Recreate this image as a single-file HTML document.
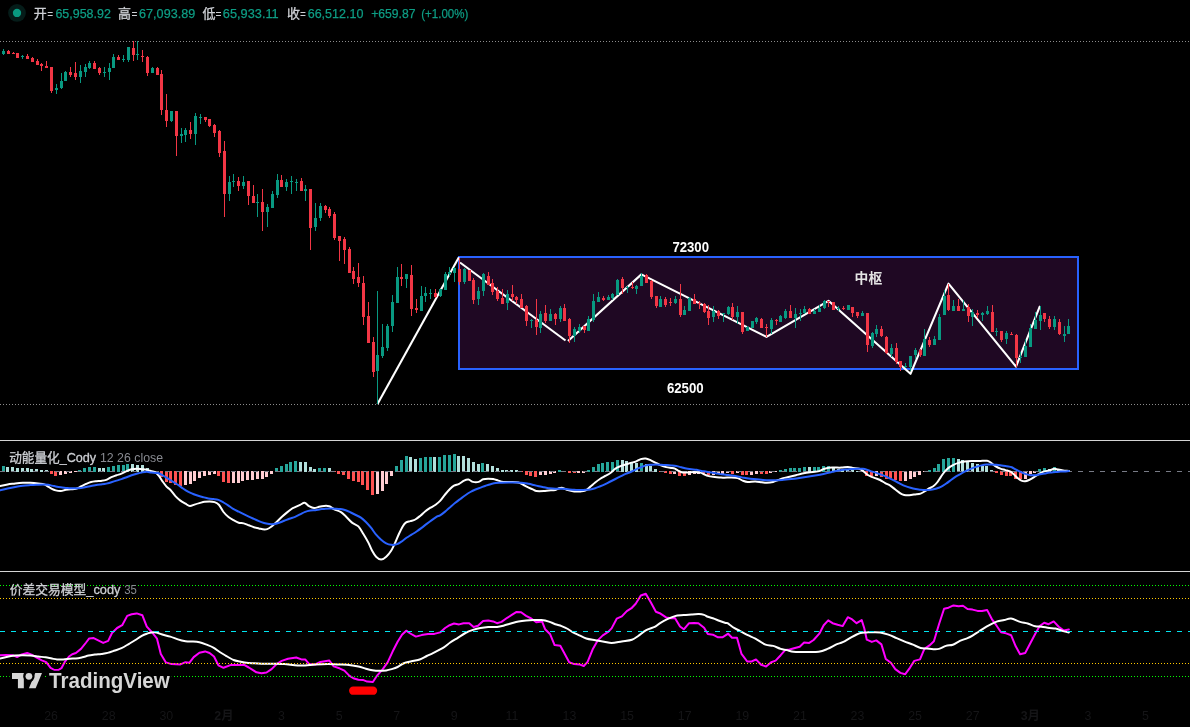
<!DOCTYPE html>
<html lang="zh"><head><meta charset="utf-8"><title>Chart</title><style>html,body{margin:0;padding:0;background:#000;overflow:hidden}svg{display:block}</style></head><body>
<svg width="1190" height="727" viewBox="0 0 1190 727" style="display:block">
<rect width="1190" height="727" fill="#000"/>
<defs>
<pattern id="dg" width="3" height="1" patternUnits="userSpaceOnUse"><rect x="0" y="0" width="1" height="1" fill="#8c8c8c"/></pattern>
<pattern id="dgr" width="3" height="1" patternUnits="userSpaceOnUse"><rect x="0" y="0" width="1" height="1" fill="#00ff00"/></pattern>
<pattern id="dor" width="3" height="1" patternUnits="userSpaceOnUse"><rect x="0" y="0" width="1" height="1" fill="#ffc800"/></pattern>
<pattern id="dcy" width="11" height="1" patternUnits="userSpaceOnUse"><rect x="0" y="0" width="5" height="1" fill="#00e5f0"/></pattern>
<pattern id="dzz" width="11" height="1" patternUnits="userSpaceOnUse"><rect x="0" y="0" width="5" height="1" fill="#787b86"/></pattern>
</defs>
<g shape-rendering="crispEdges">
<rect x="0" y="41" width="1190" height="1" fill="url(#dg)"/>
<rect x="0" y="404" width="1190" height="1" fill="url(#dg)"/>
<rect x="0" y="440" width="1190" height="1" fill="#d4d4d4"/>
<rect x="0" y="571" width="1190" height="1" fill="#d4d4d4"/>
<rect x="459" y="257" width="619" height="112" fill="#1f0823" stroke="#2962ff" stroke-width="2"/>
</g>
<polyline points="377.5,404 458.9,257.3" fill="none" stroke="#fff" stroke-width="2.1" stroke-linejoin="round" stroke-linecap="butt"/>
<polyline points="460,262.5 565.5,340.5" fill="none" stroke="#fff" stroke-width="2.1" stroke-linejoin="round" stroke-linecap="butt"/>
<polyline points="568,341 641.4,274.4 766.5,336.9 828.5,300.8 910.5,373.8 948.5,283.6 1016,366.7 1040,305.8" fill="none" stroke="#fff" stroke-width="2.1" stroke-linejoin="round" stroke-linecap="butt"/>
<g shape-rendering="crispEdges">
<rect x="3" y="49" width="1" height="6" fill="#089981"/>
<rect x="2" y="51" width="3" height="3" fill="#089981"/>
<rect x="8" y="50" width="1" height="4" fill="#f23645"/>
<rect x="7" y="51" width="3" height="3" fill="#f23645"/>
<rect x="13" y="52" width="1" height="2" fill="#f23645"/>
<rect x="12" y="53" width="3" height="1" fill="#f23645"/>
<rect x="17" y="53" width="1" height="5" fill="#f23645"/>
<rect x="16" y="53" width="3" height="5" fill="#f23645"/>
<rect x="22" y="55" width="1" height="4" fill="#089981"/>
<rect x="21" y="56" width="3" height="1" fill="#089981"/>
<rect x="27" y="54" width="1" height="5" fill="#f23645"/>
<rect x="26" y="56" width="3" height="3" fill="#f23645"/>
<rect x="32" y="57" width="1" height="5" fill="#f23645"/>
<rect x="31" y="58" width="3" height="4" fill="#f23645"/>
<rect x="37" y="59" width="1" height="6" fill="#f23645"/>
<rect x="36" y="61" width="3" height="4" fill="#f23645"/>
<rect x="41" y="63" width="1" height="8" fill="#f23645"/>
<rect x="40" y="64" width="3" height="2" fill="#f23645"/>
<rect x="46" y="61" width="1" height="7" fill="#f23645"/>
<rect x="45" y="66" width="3" height="2" fill="#f23645"/>
<rect x="51" y="67" width="1" height="26" fill="#f23645"/>
<rect x="50" y="67" width="3" height="24" fill="#f23645"/>
<rect x="56" y="84" width="1" height="10" fill="#089981"/>
<rect x="55" y="88" width="3" height="2" fill="#089981"/>
<rect x="61" y="73" width="1" height="16" fill="#089981"/>
<rect x="60" y="81" width="3" height="7" fill="#089981"/>
<rect x="65" y="71" width="1" height="10" fill="#089981"/>
<rect x="64" y="72" width="3" height="9" fill="#089981"/>
<rect x="70" y="67" width="1" height="10" fill="#f23645"/>
<rect x="69" y="72" width="3" height="3" fill="#f23645"/>
<rect x="75" y="62" width="1" height="18" fill="#f23645"/>
<rect x="74" y="73" width="3" height="4" fill="#f23645"/>
<rect x="80" y="65" width="1" height="18" fill="#089981"/>
<rect x="79" y="71" width="3" height="6" fill="#089981"/>
<rect x="85" y="64" width="1" height="13" fill="#089981"/>
<rect x="84" y="67" width="3" height="5" fill="#089981"/>
<rect x="89" y="61" width="1" height="8" fill="#089981"/>
<rect x="88" y="63" width="3" height="5" fill="#089981"/>
<rect x="94" y="61" width="1" height="8" fill="#f23645"/>
<rect x="93" y="63" width="3" height="6" fill="#f23645"/>
<rect x="99" y="67" width="1" height="8" fill="#f23645"/>
<rect x="98" y="68" width="3" height="5" fill="#f23645"/>
<rect x="104" y="67" width="1" height="10" fill="#089981"/>
<rect x="103" y="72" width="3" height="1" fill="#089981"/>
<rect x="109" y="63" width="1" height="17" fill="#089981"/>
<rect x="108" y="68" width="3" height="4" fill="#089981"/>
<rect x="113" y="54" width="1" height="14" fill="#089981"/>
<rect x="112" y="57" width="3" height="11" fill="#089981"/>
<rect x="118" y="55" width="1" height="5" fill="#f23645"/>
<rect x="117" y="57" width="3" height="3" fill="#f23645"/>
<rect x="123" y="55" width="1" height="7" fill="#089981"/>
<rect x="122" y="59" width="3" height="1" fill="#089981"/>
<rect x="128" y="47" width="1" height="15" fill="#089981"/>
<rect x="127" y="47" width="3" height="13" fill="#089981"/>
<rect x="133" y="41" width="1" height="20" fill="#f23645"/>
<rect x="132" y="48" width="3" height="7" fill="#f23645"/>
<rect x="137" y="41" width="1" height="19" fill="#089981"/>
<rect x="136" y="54" width="3" height="1" fill="#089981"/>
<rect x="142" y="50" width="1" height="12" fill="#f23645"/>
<rect x="141" y="56" width="3" height="1" fill="#f23645"/>
<rect x="147" y="56" width="1" height="20" fill="#f23645"/>
<rect x="146" y="57" width="3" height="16" fill="#f23645"/>
<rect x="152" y="67" width="1" height="6" fill="#089981"/>
<rect x="151" y="68" width="3" height="5" fill="#089981"/>
<rect x="157" y="67" width="1" height="8" fill="#f23645"/>
<rect x="156" y="68" width="3" height="7" fill="#f23645"/>
<rect x="161" y="70" width="1" height="45" fill="#f23645"/>
<rect x="160" y="74" width="3" height="36" fill="#f23645"/>
<rect x="166" y="94" width="1" height="33" fill="#f23645"/>
<rect x="165" y="110" width="3" height="11" fill="#f23645"/>
<rect x="171" y="111" width="1" height="11" fill="#089981"/>
<rect x="170" y="111" width="3" height="10" fill="#089981"/>
<rect x="176" y="111" width="1" height="45" fill="#f23645"/>
<rect x="175" y="111" width="3" height="25" fill="#f23645"/>
<rect x="181" y="128" width="1" height="15" fill="#089981"/>
<rect x="180" y="134" width="3" height="2" fill="#089981"/>
<rect x="185" y="128" width="1" height="14" fill="#089981"/>
<rect x="184" y="130" width="3" height="5" fill="#089981"/>
<rect x="190" y="122" width="1" height="17" fill="#f23645"/>
<rect x="189" y="130" width="3" height="4" fill="#f23645"/>
<rect x="195" y="113" width="1" height="32" fill="#089981"/>
<rect x="194" y="116" width="3" height="18" fill="#089981"/>
<rect x="200" y="114" width="1" height="10" fill="#089981"/>
<rect x="199" y="117" width="3" height="1" fill="#089981"/>
<rect x="205" y="117" width="1" height="5" fill="#f23645"/>
<rect x="204" y="117" width="3" height="3" fill="#f23645"/>
<rect x="209" y="119" width="1" height="8" fill="#f23645"/>
<rect x="208" y="119" width="3" height="7" fill="#f23645"/>
<rect x="214" y="124" width="1" height="13" fill="#f23645"/>
<rect x="213" y="125" width="3" height="8" fill="#f23645"/>
<rect x="219" y="130" width="1" height="27" fill="#f23645"/>
<rect x="218" y="131" width="3" height="22" fill="#f23645"/>
<rect x="224" y="141" width="1" height="76" fill="#f23645"/>
<rect x="223" y="151" width="3" height="43" fill="#f23645"/>
<rect x="229" y="176" width="1" height="25" fill="#089981"/>
<rect x="228" y="182" width="3" height="12" fill="#089981"/>
<rect x="233" y="174" width="1" height="13" fill="#089981"/>
<rect x="232" y="181" width="3" height="1" fill="#089981"/>
<rect x="238" y="177" width="1" height="14" fill="#f23645"/>
<rect x="237" y="181" width="3" height="5" fill="#f23645"/>
<rect x="243" y="176" width="1" height="13" fill="#089981"/>
<rect x="242" y="182" width="3" height="4" fill="#089981"/>
<rect x="248" y="181" width="1" height="24" fill="#f23645"/>
<rect x="247" y="181" width="3" height="15" fill="#f23645"/>
<rect x="253" y="185" width="1" height="18" fill="#f23645"/>
<rect x="252" y="196" width="3" height="7" fill="#f23645"/>
<rect x="257" y="194" width="1" height="23" fill="#089981"/>
<rect x="256" y="202" width="3" height="1" fill="#089981"/>
<rect x="262" y="189" width="1" height="42" fill="#f23645"/>
<rect x="261" y="202" width="3" height="10" fill="#f23645"/>
<rect x="267" y="204" width="1" height="23" fill="#089981"/>
<rect x="266" y="207" width="3" height="5" fill="#089981"/>
<rect x="272" y="191" width="1" height="17" fill="#089981"/>
<rect x="271" y="194" width="3" height="14" fill="#089981"/>
<rect x="277" y="174" width="1" height="24" fill="#089981"/>
<rect x="276" y="180" width="3" height="15" fill="#089981"/>
<rect x="281" y="175" width="1" height="12" fill="#f23645"/>
<rect x="280" y="180" width="3" height="7" fill="#f23645"/>
<rect x="286" y="179" width="1" height="12" fill="#089981"/>
<rect x="285" y="182" width="3" height="5" fill="#089981"/>
<rect x="291" y="176" width="1" height="18" fill="#089981"/>
<rect x="290" y="181" width="3" height="1" fill="#089981"/>
<rect x="296" y="179" width="1" height="12" fill="#089981"/>
<rect x="295" y="182" width="3" height="1" fill="#089981"/>
<rect x="301" y="178" width="1" height="13" fill="#f23645"/>
<rect x="300" y="181" width="3" height="10" fill="#f23645"/>
<rect x="305" y="185" width="1" height="16" fill="#089981"/>
<rect x="304" y="189" width="3" height="2" fill="#089981"/>
<rect x="310" y="189" width="1" height="61" fill="#f23645"/>
<rect x="309" y="189" width="3" height="39" fill="#f23645"/>
<rect x="315" y="203" width="1" height="28" fill="#089981"/>
<rect x="314" y="218" width="3" height="9" fill="#089981"/>
<rect x="320" y="203" width="1" height="18" fill="#089981"/>
<rect x="319" y="206" width="3" height="12" fill="#089981"/>
<rect x="325" y="205" width="1" height="8" fill="#f23645"/>
<rect x="324" y="206" width="3" height="4" fill="#f23645"/>
<rect x="329" y="207" width="1" height="11" fill="#f23645"/>
<rect x="328" y="209" width="3" height="7" fill="#f23645"/>
<rect x="334" y="212" width="1" height="28" fill="#f23645"/>
<rect x="333" y="214" width="3" height="24" fill="#f23645"/>
<rect x="339" y="236" width="1" height="25" fill="#f23645"/>
<rect x="338" y="236" width="3" height="5" fill="#f23645"/>
<rect x="344" y="237" width="1" height="27" fill="#f23645"/>
<rect x="343" y="239" width="3" height="11" fill="#f23645"/>
<rect x="349" y="247" width="1" height="26" fill="#f23645"/>
<rect x="348" y="249" width="3" height="24" fill="#f23645"/>
<rect x="353" y="267" width="1" height="17" fill="#f23645"/>
<rect x="352" y="271" width="3" height="8" fill="#f23645"/>
<rect x="358" y="263" width="1" height="24" fill="#f23645"/>
<rect x="357" y="277" width="3" height="6" fill="#f23645"/>
<rect x="363" y="276" width="1" height="49" fill="#f23645"/>
<rect x="362" y="283" width="3" height="34" fill="#f23645"/>
<rect x="368" y="302" width="1" height="41" fill="#f23645"/>
<rect x="367" y="316" width="3" height="27" fill="#f23645"/>
<rect x="373" y="337" width="1" height="40" fill="#f23645"/>
<rect x="372" y="342" width="3" height="30" fill="#f23645"/>
<rect x="377" y="291" width="1" height="113" fill="#089981"/>
<rect x="376" y="355" width="3" height="16" fill="#089981"/>
<rect x="382" y="324" width="1" height="34" fill="#089981"/>
<rect x="381" y="347" width="3" height="9" fill="#089981"/>
<rect x="387" y="324" width="1" height="27" fill="#089981"/>
<rect x="386" y="326" width="3" height="22" fill="#089981"/>
<rect x="392" y="295" width="1" height="37" fill="#089981"/>
<rect x="391" y="302" width="3" height="24" fill="#089981"/>
<rect x="397" y="267" width="1" height="36" fill="#089981"/>
<rect x="396" y="277" width="3" height="26" fill="#089981"/>
<rect x="401" y="264" width="1" height="22" fill="#f23645"/>
<rect x="400" y="277" width="3" height="2" fill="#f23645"/>
<rect x="406" y="274" width="1" height="14" fill="#089981"/>
<rect x="405" y="274" width="3" height="5" fill="#089981"/>
<rect x="411" y="265" width="1" height="51" fill="#f23645"/>
<rect x="410" y="275" width="3" height="34" fill="#f23645"/>
<rect x="416" y="299" width="1" height="14" fill="#f23645"/>
<rect x="415" y="308" width="3" height="2" fill="#f23645"/>
<rect x="421" y="286" width="1" height="25" fill="#089981"/>
<rect x="420" y="296" width="3" height="15" fill="#089981"/>
<rect x="425" y="287" width="1" height="15" fill="#089981"/>
<rect x="424" y="293" width="3" height="3" fill="#089981"/>
<rect x="430" y="289" width="1" height="10" fill="#089981"/>
<rect x="429" y="293" width="3" height="1" fill="#089981"/>
<rect x="435" y="289" width="1" height="9" fill="#f23645"/>
<rect x="434" y="293" width="3" height="4" fill="#f23645"/>
<rect x="440" y="289" width="1" height="8" fill="#089981"/>
<rect x="439" y="289" width="3" height="7" fill="#089981"/>
<rect x="445" y="272" width="1" height="18" fill="#089981"/>
<rect x="444" y="274" width="3" height="16" fill="#089981"/>
<rect x="449" y="267" width="1" height="10" fill="#089981"/>
<rect x="448" y="272" width="3" height="2" fill="#089981"/>
<rect x="454" y="267" width="1" height="15" fill="#089981"/>
<rect x="453" y="268" width="3" height="5" fill="#089981"/>
<rect x="459" y="258" width="1" height="27" fill="#f23645"/>
<rect x="458" y="269" width="3" height="13" fill="#f23645"/>
<rect x="464" y="268" width="1" height="16" fill="#089981"/>
<rect x="463" y="269" width="3" height="13" fill="#089981"/>
<rect x="469" y="270" width="1" height="11" fill="#f23645"/>
<rect x="468" y="270" width="3" height="11" fill="#f23645"/>
<rect x="473" y="278" width="1" height="26" fill="#f23645"/>
<rect x="472" y="280" width="3" height="20" fill="#f23645"/>
<rect x="478" y="287" width="1" height="18" fill="#089981"/>
<rect x="477" y="291" width="3" height="8" fill="#089981"/>
<rect x="483" y="273" width="1" height="23" fill="#089981"/>
<rect x="482" y="274" width="3" height="17" fill="#089981"/>
<rect x="488" y="272" width="1" height="13" fill="#f23645"/>
<rect x="487" y="276" width="3" height="9" fill="#f23645"/>
<rect x="492" y="279" width="1" height="16" fill="#f23645"/>
<rect x="491" y="283" width="3" height="9" fill="#f23645"/>
<rect x="497" y="287" width="1" height="14" fill="#f23645"/>
<rect x="496" y="291" width="3" height="8" fill="#f23645"/>
<rect x="502" y="289" width="1" height="15" fill="#f23645"/>
<rect x="501" y="298" width="3" height="6" fill="#f23645"/>
<rect x="507" y="290" width="1" height="20" fill="#089981"/>
<rect x="506" y="294" width="3" height="9" fill="#089981"/>
<rect x="512" y="285" width="1" height="16" fill="#f23645"/>
<rect x="511" y="294" width="3" height="3" fill="#f23645"/>
<rect x="516" y="296" width="1" height="8" fill="#f23645"/>
<rect x="515" y="297" width="3" height="3" fill="#f23645"/>
<rect x="521" y="294" width="1" height="14" fill="#f23645"/>
<rect x="520" y="299" width="3" height="9" fill="#f23645"/>
<rect x="526" y="305" width="1" height="21" fill="#f23645"/>
<rect x="525" y="306" width="3" height="15" fill="#f23645"/>
<rect x="531" y="319" width="1" height="9" fill="#089981"/>
<rect x="530" y="320" width="3" height="1" fill="#089981"/>
<rect x="536" y="299" width="1" height="36" fill="#f23645"/>
<rect x="535" y="320" width="3" height="7" fill="#f23645"/>
<rect x="540" y="311" width="1" height="22" fill="#089981"/>
<rect x="539" y="314" width="3" height="14" fill="#089981"/>
<rect x="545" y="305" width="1" height="18" fill="#f23645"/>
<rect x="544" y="313" width="3" height="8" fill="#f23645"/>
<rect x="550" y="309" width="1" height="12" fill="#089981"/>
<rect x="549" y="314" width="3" height="7" fill="#089981"/>
<rect x="555" y="313" width="1" height="12" fill="#f23645"/>
<rect x="554" y="314" width="3" height="5" fill="#f23645"/>
<rect x="560" y="306" width="1" height="16" fill="#089981"/>
<rect x="559" y="308" width="3" height="11" fill="#089981"/>
<rect x="564" y="304" width="1" height="17" fill="#f23645"/>
<rect x="563" y="308" width="3" height="13" fill="#f23645"/>
<rect x="569" y="318" width="1" height="25" fill="#f23645"/>
<rect x="568" y="319" width="3" height="17" fill="#f23645"/>
<rect x="574" y="327" width="1" height="15" fill="#089981"/>
<rect x="573" y="329" width="3" height="7" fill="#089981"/>
<rect x="579" y="324" width="1" height="9" fill="#089981"/>
<rect x="578" y="327" width="3" height="4" fill="#089981"/>
<rect x="584" y="326" width="1" height="7" fill="#f23645"/>
<rect x="583" y="326" width="3" height="4" fill="#f23645"/>
<rect x="588" y="316" width="1" height="15" fill="#089981"/>
<rect x="587" y="319" width="3" height="12" fill="#089981"/>
<rect x="593" y="294" width="1" height="28" fill="#089981"/>
<rect x="592" y="301" width="3" height="19" fill="#089981"/>
<rect x="598" y="292" width="1" height="10" fill="#089981"/>
<rect x="597" y="297" width="3" height="5" fill="#089981"/>
<rect x="603" y="296" width="1" height="5" fill="#f23645"/>
<rect x="602" y="298" width="3" height="2" fill="#f23645"/>
<rect x="608" y="295" width="1" height="5" fill="#089981"/>
<rect x="607" y="297" width="3" height="3" fill="#089981"/>
<rect x="612" y="293" width="1" height="7" fill="#089981"/>
<rect x="611" y="294" width="3" height="4" fill="#089981"/>
<rect x="617" y="279" width="1" height="16" fill="#089981"/>
<rect x="616" y="280" width="3" height="15" fill="#089981"/>
<rect x="622" y="277" width="1" height="17" fill="#f23645"/>
<rect x="621" y="279" width="3" height="9" fill="#f23645"/>
<rect x="627" y="286" width="1" height="7" fill="#089981"/>
<rect x="626" y="287" width="3" height="1" fill="#089981"/>
<rect x="632" y="282" width="1" height="7" fill="#f23645"/>
<rect x="631" y="287" width="3" height="1" fill="#f23645"/>
<rect x="636" y="285" width="1" height="9" fill="#089981"/>
<rect x="635" y="286" width="3" height="3" fill="#089981"/>
<rect x="641" y="273" width="1" height="13" fill="#089981"/>
<rect x="640" y="276" width="3" height="10" fill="#089981"/>
<rect x="646" y="274" width="1" height="9" fill="#f23645"/>
<rect x="645" y="275" width="3" height="8" fill="#f23645"/>
<rect x="651" y="280" width="1" height="19" fill="#f23645"/>
<rect x="650" y="281" width="3" height="16" fill="#f23645"/>
<rect x="656" y="296" width="1" height="12" fill="#f23645"/>
<rect x="655" y="296" width="3" height="10" fill="#f23645"/>
<rect x="660" y="296" width="1" height="11" fill="#089981"/>
<rect x="659" y="299" width="3" height="8" fill="#089981"/>
<rect x="665" y="297" width="1" height="10" fill="#f23645"/>
<rect x="664" y="299" width="3" height="6" fill="#f23645"/>
<rect x="670" y="298" width="1" height="8" fill="#f23645"/>
<rect x="669" y="302" width="3" height="1" fill="#f23645"/>
<rect x="675" y="296" width="1" height="8" fill="#089981"/>
<rect x="674" y="299" width="3" height="4" fill="#089981"/>
<rect x="680" y="284" width="1" height="33" fill="#f23645"/>
<rect x="679" y="299" width="3" height="16" fill="#f23645"/>
<rect x="684" y="306" width="1" height="9" fill="#089981"/>
<rect x="683" y="310" width="3" height="5" fill="#089981"/>
<rect x="689" y="297" width="1" height="14" fill="#089981"/>
<rect x="688" y="298" width="3" height="13" fill="#089981"/>
<rect x="694" y="294" width="1" height="10" fill="#f23645"/>
<rect x="693" y="299" width="3" height="5" fill="#f23645"/>
<rect x="699" y="301" width="1" height="8" fill="#f23645"/>
<rect x="698" y="303" width="3" height="1" fill="#f23645"/>
<rect x="704" y="303" width="1" height="10" fill="#f23645"/>
<rect x="703" y="304" width="3" height="8" fill="#f23645"/>
<rect x="708" y="305" width="1" height="20" fill="#f23645"/>
<rect x="707" y="311" width="3" height="7" fill="#f23645"/>
<rect x="713" y="306" width="1" height="16" fill="#089981"/>
<rect x="712" y="311" width="3" height="6" fill="#089981"/>
<rect x="718" y="310" width="1" height="9" fill="#f23645"/>
<rect x="717" y="311" width="3" height="5" fill="#f23645"/>
<rect x="723" y="313" width="1" height="9" fill="#089981"/>
<rect x="722" y="313" width="3" height="1" fill="#089981"/>
<rect x="728" y="306" width="1" height="9" fill="#089981"/>
<rect x="727" y="307" width="3" height="7" fill="#089981"/>
<rect x="732" y="303" width="1" height="17" fill="#f23645"/>
<rect x="731" y="307" width="3" height="10" fill="#f23645"/>
<rect x="737" y="306" width="1" height="18" fill="#089981"/>
<rect x="736" y="312" width="3" height="5" fill="#089981"/>
<rect x="742" y="312" width="1" height="22" fill="#f23645"/>
<rect x="741" y="312" width="3" height="20" fill="#f23645"/>
<rect x="747" y="326" width="1" height="5" fill="#089981"/>
<rect x="746" y="327" width="3" height="4" fill="#089981"/>
<rect x="752" y="321" width="1" height="7" fill="#089981"/>
<rect x="751" y="321" width="3" height="7" fill="#089981"/>
<rect x="756" y="317" width="1" height="7" fill="#089981"/>
<rect x="755" y="318" width="3" height="4" fill="#089981"/>
<rect x="761" y="318" width="1" height="10" fill="#f23645"/>
<rect x="760" y="319" width="3" height="9" fill="#f23645"/>
<rect x="766" y="324" width="1" height="13" fill="#f23645"/>
<rect x="765" y="327" width="3" height="1" fill="#f23645"/>
<rect x="771" y="318" width="1" height="16" fill="#089981"/>
<rect x="770" y="320" width="3" height="9" fill="#089981"/>
<rect x="776" y="319" width="1" height="6" fill="#f23645"/>
<rect x="775" y="320" width="3" height="1" fill="#f23645"/>
<rect x="780" y="315" width="1" height="7" fill="#089981"/>
<rect x="779" y="316" width="3" height="6" fill="#089981"/>
<rect x="785" y="309" width="1" height="10" fill="#089981"/>
<rect x="784" y="311" width="3" height="7" fill="#089981"/>
<rect x="790" y="305" width="1" height="13" fill="#f23645"/>
<rect x="789" y="311" width="3" height="7" fill="#f23645"/>
<rect x="795" y="308" width="1" height="20" fill="#089981"/>
<rect x="794" y="314" width="3" height="4" fill="#089981"/>
<rect x="800" y="309" width="1" height="12" fill="#089981"/>
<rect x="799" y="313" width="3" height="1" fill="#089981"/>
<rect x="804" y="306" width="1" height="8" fill="#089981"/>
<rect x="803" y="309" width="3" height="4" fill="#089981"/>
<rect x="809" y="308" width="1" height="6" fill="#f23645"/>
<rect x="808" y="309" width="3" height="5" fill="#f23645"/>
<rect x="814" y="309" width="1" height="5" fill="#089981"/>
<rect x="813" y="311" width="3" height="3" fill="#089981"/>
<rect x="819" y="305" width="1" height="7" fill="#089981"/>
<rect x="818" y="308" width="3" height="4" fill="#089981"/>
<rect x="824" y="300" width="1" height="9" fill="#089981"/>
<rect x="823" y="301" width="3" height="7" fill="#089981"/>
<rect x="828" y="301" width="1" height="6" fill="#f23645"/>
<rect x="827" y="301" width="3" height="1" fill="#f23645"/>
<rect x="833" y="302" width="1" height="8" fill="#f23645"/>
<rect x="832" y="302" width="3" height="8" fill="#f23645"/>
<rect x="838" y="306" width="1" height="5" fill="#089981"/>
<rect x="837" y="308" width="3" height="1" fill="#089981"/>
<rect x="843" y="306" width="1" height="4" fill="#f23645"/>
<rect x="842" y="308" width="3" height="1" fill="#f23645"/>
<rect x="848" y="305" width="1" height="5" fill="#089981"/>
<rect x="847" y="305" width="3" height="5" fill="#089981"/>
<rect x="852" y="307" width="1" height="10" fill="#f23645"/>
<rect x="851" y="307" width="3" height="6" fill="#f23645"/>
<rect x="857" y="312" width="1" height="6" fill="#f23645"/>
<rect x="856" y="312" width="3" height="4" fill="#f23645"/>
<rect x="862" y="311" width="1" height="5" fill="#089981"/>
<rect x="861" y="313" width="3" height="3" fill="#089981"/>
<rect x="867" y="313" width="1" height="39" fill="#f23645"/>
<rect x="866" y="313" width="3" height="32" fill="#f23645"/>
<rect x="872" y="332" width="1" height="16" fill="#089981"/>
<rect x="871" y="333" width="3" height="13" fill="#089981"/>
<rect x="876" y="325" width="1" height="12" fill="#089981"/>
<rect x="875" y="329" width="3" height="5" fill="#089981"/>
<rect x="881" y="326" width="1" height="11" fill="#f23645"/>
<rect x="880" y="329" width="3" height="7" fill="#f23645"/>
<rect x="886" y="336" width="1" height="18" fill="#f23645"/>
<rect x="885" y="337" width="3" height="16" fill="#f23645"/>
<rect x="891" y="344" width="1" height="13" fill="#089981"/>
<rect x="890" y="348" width="3" height="6" fill="#089981"/>
<rect x="896" y="343" width="1" height="21" fill="#f23645"/>
<rect x="895" y="348" width="3" height="14" fill="#f23645"/>
<rect x="900" y="361" width="1" height="10" fill="#f23645"/>
<rect x="899" y="361" width="3" height="6" fill="#f23645"/>
<rect x="905" y="363" width="1" height="5" fill="#089981"/>
<rect x="904" y="366" width="3" height="1" fill="#089981"/>
<rect x="910" y="356" width="1" height="15" fill="#089981"/>
<rect x="909" y="356" width="3" height="11" fill="#089981"/>
<rect x="915" y="348" width="1" height="11" fill="#089981"/>
<rect x="914" y="350" width="3" height="5" fill="#089981"/>
<rect x="920" y="349" width="1" height="8" fill="#f23645"/>
<rect x="919" y="350" width="3" height="5" fill="#f23645"/>
<rect x="924" y="329" width="1" height="27" fill="#089981"/>
<rect x="923" y="339" width="3" height="17" fill="#089981"/>
<rect x="929" y="337" width="1" height="10" fill="#f23645"/>
<rect x="928" y="340" width="3" height="5" fill="#f23645"/>
<rect x="934" y="336" width="1" height="9" fill="#089981"/>
<rect x="933" y="339" width="3" height="6" fill="#089981"/>
<rect x="939" y="314" width="1" height="26" fill="#089981"/>
<rect x="938" y="317" width="3" height="23" fill="#089981"/>
<rect x="944" y="290" width="1" height="25" fill="#089981"/>
<rect x="943" y="296" width="3" height="19" fill="#089981"/>
<rect x="948" y="284" width="1" height="27" fill="#f23645"/>
<rect x="947" y="295" width="3" height="15" fill="#f23645"/>
<rect x="953" y="300" width="1" height="11" fill="#089981"/>
<rect x="952" y="306" width="3" height="5" fill="#089981"/>
<rect x="958" y="299" width="1" height="12" fill="#f23645"/>
<rect x="957" y="306" width="3" height="5" fill="#f23645"/>
<rect x="963" y="300" width="1" height="11" fill="#089981"/>
<rect x="962" y="309" width="3" height="2" fill="#089981"/>
<rect x="968" y="304" width="1" height="18" fill="#f23645"/>
<rect x="967" y="307" width="3" height="9" fill="#f23645"/>
<rect x="972" y="309" width="1" height="17" fill="#089981"/>
<rect x="971" y="312" width="3" height="5" fill="#089981"/>
<rect x="977" y="310" width="1" height="8" fill="#f23645"/>
<rect x="976" y="313" width="3" height="2" fill="#f23645"/>
<rect x="982" y="312" width="1" height="9" fill="#089981"/>
<rect x="981" y="313" width="3" height="2" fill="#089981"/>
<rect x="987" y="306" width="1" height="9" fill="#089981"/>
<rect x="986" y="311" width="3" height="3" fill="#089981"/>
<rect x="992" y="305" width="1" height="27" fill="#f23645"/>
<rect x="991" y="312" width="3" height="20" fill="#f23645"/>
<rect x="996" y="328" width="1" height="8" fill="#089981"/>
<rect x="995" y="331" width="3" height="1" fill="#089981"/>
<rect x="1001" y="331" width="1" height="11" fill="#f23645"/>
<rect x="1000" y="331" width="3" height="9" fill="#f23645"/>
<rect x="1006" y="331" width="1" height="13" fill="#089981"/>
<rect x="1005" y="333" width="3" height="6" fill="#089981"/>
<rect x="1011" y="332" width="1" height="3" fill="#f23645"/>
<rect x="1010" y="334" width="3" height="1" fill="#f23645"/>
<rect x="1016" y="334" width="1" height="33" fill="#f23645"/>
<rect x="1015" y="335" width="3" height="23" fill="#f23645"/>
<rect x="1020" y="352" width="1" height="11" fill="#089981"/>
<rect x="1019" y="357" width="3" height="1" fill="#089981"/>
<rect x="1025" y="339" width="1" height="18" fill="#089981"/>
<rect x="1024" y="346" width="3" height="11" fill="#089981"/>
<rect x="1030" y="324" width="1" height="23" fill="#089981"/>
<rect x="1029" y="328" width="3" height="19" fill="#089981"/>
<rect x="1035" y="312" width="1" height="17" fill="#089981"/>
<rect x="1034" y="320" width="3" height="9" fill="#089981"/>
<rect x="1040" y="306" width="1" height="24" fill="#089981"/>
<rect x="1039" y="315" width="3" height="6" fill="#089981"/>
<rect x="1044" y="313" width="1" height="9" fill="#f23645"/>
<rect x="1043" y="313" width="3" height="6" fill="#f23645"/>
<rect x="1049" y="316" width="1" height="13" fill="#f23645"/>
<rect x="1048" y="319" width="3" height="8" fill="#f23645"/>
<rect x="1054" y="316" width="1" height="14" fill="#089981"/>
<rect x="1053" y="319" width="3" height="8" fill="#089981"/>
<rect x="1059" y="319" width="1" height="16" fill="#f23645"/>
<rect x="1058" y="322" width="3" height="12" fill="#f23645"/>
<rect x="1064" y="326" width="1" height="16" fill="#089981"/>
<rect x="1063" y="334" width="3" height="2" fill="#089981"/>
<rect x="1068" y="319" width="1" height="15" fill="#089981"/>
<rect x="1067" y="326" width="3" height="8" fill="#089981"/>
</g>
<g shape-rendering="crispEdges">
<rect x="2" y="466" width="3" height="6" fill="#26a69a"/>
<rect x="6" y="467" width="3" height="5" fill="#b2dfdb"/>
<rect x="11" y="467" width="3" height="5" fill="#b2dfdb"/>
<rect x="16" y="468" width="3" height="4" fill="#b2dfdb"/>
<rect x="21" y="468" width="3" height="4" fill="#b2dfdb"/>
<rect x="26" y="468" width="3" height="4" fill="#b2dfdb"/>
<rect x="30" y="469" width="3" height="3" fill="#b2dfdb"/>
<rect x="35" y="469" width="3" height="3" fill="#b2dfdb"/>
<rect x="40" y="470" width="3" height="2" fill="#b2dfdb"/>
<rect x="45" y="470" width="3" height="2" fill="#b2dfdb"/>
<rect x="50" y="471" width="3" height="3" fill="#ff5252"/>
<rect x="54" y="471" width="3" height="5" fill="#ff5252"/>
<rect x="59" y="471" width="3" height="4" fill="#ffcdd2"/>
<rect x="64" y="471" width="3" height="3" fill="#ffcdd2"/>
<rect x="69" y="471" width="3" height="2" fill="#ffcdd2"/>
<rect x="74" y="471" width="3" height="1" fill="#ffcdd2"/>
<rect x="78" y="470" width="3" height="2" fill="#26a69a"/>
<rect x="83" y="468" width="3" height="4" fill="#26a69a"/>
<rect x="88" y="467" width="3" height="5" fill="#26a69a"/>
<rect x="93" y="467" width="3" height="5" fill="#26a69a"/>
<rect x="98" y="468" width="3" height="4" fill="#b2dfdb"/>
<rect x="102" y="468" width="3" height="4" fill="#b2dfdb"/>
<rect x="107" y="467" width="3" height="5" fill="#26a69a"/>
<rect x="112" y="466" width="3" height="6" fill="#26a69a"/>
<rect x="117" y="465" width="3" height="7" fill="#26a69a"/>
<rect x="122" y="465" width="3" height="7" fill="#26a69a"/>
<rect x="126" y="464" width="3" height="8" fill="#26a69a"/>
<rect x="131" y="464" width="3" height="8" fill="#b2dfdb"/>
<rect x="136" y="465" width="3" height="7" fill="#b2dfdb"/>
<rect x="141" y="465" width="3" height="7" fill="#b2dfdb"/>
<rect x="146" y="468" width="3" height="4" fill="#b2dfdb"/>
<rect x="150" y="471" width="3" height="1" fill="#b2dfdb"/>
<rect x="155" y="471" width="3" height="1" fill="#ff5252"/>
<rect x="160" y="471" width="3" height="6" fill="#ff5252"/>
<rect x="165" y="471" width="3" height="11" fill="#ff5252"/>
<rect x="169" y="471" width="3" height="12" fill="#ff5252"/>
<rect x="174" y="471" width="3" height="14" fill="#ff5252"/>
<rect x="179" y="471" width="3" height="15" fill="#ff5252"/>
<rect x="184" y="471" width="3" height="14" fill="#ffcdd2"/>
<rect x="189" y="471" width="3" height="13" fill="#ffcdd2"/>
<rect x="193" y="471" width="3" height="10" fill="#ffcdd2"/>
<rect x="198" y="471" width="3" height="7" fill="#ffcdd2"/>
<rect x="203" y="471" width="3" height="5" fill="#ffcdd2"/>
<rect x="208" y="471" width="3" height="4" fill="#ffcdd2"/>
<rect x="213" y="471" width="3" height="3" fill="#ffcdd2"/>
<rect x="217" y="471" width="3" height="5" fill="#ff5252"/>
<rect x="222" y="471" width="3" height="11" fill="#ff5252"/>
<rect x="227" y="471" width="3" height="12" fill="#ff5252"/>
<rect x="232" y="471" width="3" height="12" fill="#ffcdd2"/>
<rect x="237" y="471" width="3" height="12" fill="#ffcdd2"/>
<rect x="241" y="471" width="3" height="10" fill="#ffcdd2"/>
<rect x="246" y="471" width="3" height="9" fill="#ffcdd2"/>
<rect x="251" y="471" width="3" height="9" fill="#ffcdd2"/>
<rect x="256" y="471" width="3" height="8" fill="#ffcdd2"/>
<rect x="261" y="471" width="3" height="8" fill="#ffcdd2"/>
<rect x="265" y="471" width="3" height="6" fill="#ffcdd2"/>
<rect x="270" y="471" width="3" height="3" fill="#ffcdd2"/>
<rect x="275" y="468" width="3" height="4" fill="#26a69a"/>
<rect x="280" y="466" width="3" height="6" fill="#26a69a"/>
<rect x="285" y="464" width="3" height="8" fill="#26a69a"/>
<rect x="289" y="462" width="3" height="10" fill="#26a69a"/>
<rect x="294" y="461" width="3" height="11" fill="#26a69a"/>
<rect x="299" y="462" width="3" height="10" fill="#b2dfdb"/>
<rect x="304" y="462" width="3" height="10" fill="#b2dfdb"/>
<rect x="309" y="467" width="3" height="5" fill="#b2dfdb"/>
<rect x="313" y="469" width="3" height="3" fill="#b2dfdb"/>
<rect x="318" y="468" width="3" height="4" fill="#26a69a"/>
<rect x="323" y="468" width="3" height="4" fill="#26a69a"/>
<rect x="328" y="468" width="3" height="4" fill="#b2dfdb"/>
<rect x="333" y="471" width="3" height="1" fill="#ff5252"/>
<rect x="337" y="471" width="3" height="3" fill="#ff5252"/>
<rect x="342" y="471" width="3" height="4" fill="#ff5252"/>
<rect x="347" y="471" width="3" height="8" fill="#ff5252"/>
<rect x="352" y="471" width="3" height="10" fill="#ff5252"/>
<rect x="357" y="471" width="3" height="11" fill="#ff5252"/>
<rect x="361" y="471" width="3" height="14" fill="#ff5252"/>
<rect x="366" y="471" width="3" height="19" fill="#ff5252"/>
<rect x="371" y="471" width="3" height="24" fill="#ff5252"/>
<rect x="376" y="471" width="3" height="23" fill="#ffcdd2"/>
<rect x="381" y="471" width="3" height="20" fill="#ffcdd2"/>
<rect x="385" y="471" width="3" height="13" fill="#ffcdd2"/>
<rect x="390" y="471" width="3" height="5" fill="#ffcdd2"/>
<rect x="395" y="466" width="3" height="6" fill="#26a69a"/>
<rect x="400" y="460" width="3" height="12" fill="#26a69a"/>
<rect x="405" y="456" width="3" height="16" fill="#26a69a"/>
<rect x="409" y="457" width="3" height="15" fill="#b2dfdb"/>
<rect x="414" y="459" width="3" height="13" fill="#b2dfdb"/>
<rect x="419" y="458" width="3" height="14" fill="#26a69a"/>
<rect x="424" y="457" width="3" height="15" fill="#26a69a"/>
<rect x="429" y="457" width="3" height="15" fill="#26a69a"/>
<rect x="433" y="457" width="3" height="15" fill="#b2dfdb"/>
<rect x="438" y="457" width="3" height="15" fill="#26a69a"/>
<rect x="443" y="455" width="3" height="17" fill="#26a69a"/>
<rect x="448" y="455" width="3" height="17" fill="#26a69a"/>
<rect x="453" y="454" width="3" height="18" fill="#26a69a"/>
<rect x="457" y="456" width="3" height="16" fill="#b2dfdb"/>
<rect x="462" y="456" width="3" height="16" fill="#b2dfdb"/>
<rect x="467" y="458" width="3" height="14" fill="#b2dfdb"/>
<rect x="472" y="462" width="3" height="10" fill="#b2dfdb"/>
<rect x="477" y="464" width="3" height="8" fill="#b2dfdb"/>
<rect x="481" y="463" width="3" height="9" fill="#26a69a"/>
<rect x="486" y="464" width="3" height="8" fill="#b2dfdb"/>
<rect x="491" y="466" width="3" height="6" fill="#b2dfdb"/>
<rect x="496" y="468" width="3" height="4" fill="#b2dfdb"/>
<rect x="501" y="470" width="3" height="2" fill="#b2dfdb"/>
<rect x="505" y="470" width="3" height="2" fill="#b2dfdb"/>
<rect x="510" y="470" width="3" height="2" fill="#b2dfdb"/>
<rect x="515" y="470" width="3" height="2" fill="#b2dfdb"/>
<rect x="520" y="471" width="3" height="1" fill="#ff5252"/>
<rect x="525" y="471" width="3" height="4" fill="#ff5252"/>
<rect x="529" y="471" width="3" height="5" fill="#ff5252"/>
<rect x="534" y="471" width="3" height="6" fill="#ff5252"/>
<rect x="539" y="471" width="3" height="4" fill="#ffcdd2"/>
<rect x="544" y="471" width="3" height="4" fill="#ffcdd2"/>
<rect x="549" y="471" width="3" height="3" fill="#ffcdd2"/>
<rect x="553" y="471" width="3" height="2" fill="#ffcdd2"/>
<rect x="558" y="470" width="3" height="2" fill="#26a69a"/>
<rect x="563" y="471" width="3" height="1" fill="#26a69a"/>
<rect x="568" y="471" width="3" height="2" fill="#ff5252"/>
<rect x="573" y="471" width="3" height="2" fill="#ff5252"/>
<rect x="577" y="471" width="3" height="2" fill="#ffcdd2"/>
<rect x="582" y="471" width="3" height="2" fill="#ffcdd2"/>
<rect x="587" y="470" width="3" height="2" fill="#26a69a"/>
<rect x="592" y="467" width="3" height="5" fill="#26a69a"/>
<rect x="597" y="464" width="3" height="8" fill="#26a69a"/>
<rect x="601" y="463" width="3" height="9" fill="#26a69a"/>
<rect x="606" y="462" width="3" height="10" fill="#26a69a"/>
<rect x="611" y="462" width="3" height="10" fill="#26a69a"/>
<rect x="616" y="460" width="3" height="12" fill="#26a69a"/>
<rect x="621" y="460" width="3" height="12" fill="#b2dfdb"/>
<rect x="625" y="461" width="3" height="11" fill="#b2dfdb"/>
<rect x="630" y="462" width="3" height="10" fill="#b2dfdb"/>
<rect x="635" y="463" width="3" height="9" fill="#b2dfdb"/>
<rect x="640" y="463" width="3" height="9" fill="#26a69a"/>
<rect x="645" y="464" width="3" height="8" fill="#b2dfdb"/>
<rect x="649" y="466" width="3" height="6" fill="#b2dfdb"/>
<rect x="654" y="469" width="3" height="3" fill="#b2dfdb"/>
<rect x="659" y="471" width="3" height="1" fill="#ff5252"/>
<rect x="664" y="471" width="3" height="2" fill="#ff5252"/>
<rect x="669" y="471" width="3" height="3" fill="#ff5252"/>
<rect x="673" y="471" width="3" height="3" fill="#ffcdd2"/>
<rect x="678" y="471" width="3" height="5" fill="#ff5252"/>
<rect x="683" y="471" width="3" height="5" fill="#ff5252"/>
<rect x="688" y="471" width="3" height="4" fill="#ffcdd2"/>
<rect x="693" y="471" width="3" height="3" fill="#ffcdd2"/>
<rect x="697" y="471" width="3" height="3" fill="#ffcdd2"/>
<rect x="702" y="471" width="3" height="3" fill="#ff5252"/>
<rect x="707" y="471" width="3" height="4" fill="#ff5252"/>
<rect x="712" y="471" width="3" height="4" fill="#ffcdd2"/>
<rect x="717" y="471" width="3" height="3" fill="#ffcdd2"/>
<rect x="721" y="471" width="3" height="3" fill="#ffcdd2"/>
<rect x="726" y="471" width="3" height="2" fill="#ffcdd2"/>
<rect x="731" y="471" width="3" height="3" fill="#ff5252"/>
<rect x="736" y="471" width="3" height="2" fill="#ffcdd2"/>
<rect x="741" y="471" width="3" height="4" fill="#ff5252"/>
<rect x="745" y="471" width="3" height="4" fill="#ff5252"/>
<rect x="750" y="471" width="3" height="4" fill="#ffcdd2"/>
<rect x="755" y="471" width="3" height="3" fill="#ffcdd2"/>
<rect x="760" y="471" width="3" height="3" fill="#ff5252"/>
<rect x="765" y="471" width="3" height="3" fill="#ff5252"/>
<rect x="769" y="471" width="3" height="2" fill="#ffcdd2"/>
<rect x="774" y="471" width="3" height="1" fill="#ffcdd2"/>
<rect x="779" y="470" width="3" height="2" fill="#26a69a"/>
<rect x="784" y="469" width="3" height="3" fill="#26a69a"/>
<rect x="789" y="468" width="3" height="4" fill="#26a69a"/>
<rect x="793" y="468" width="3" height="4" fill="#26a69a"/>
<rect x="798" y="468" width="3" height="4" fill="#26a69a"/>
<rect x="803" y="467" width="3" height="5" fill="#26a69a"/>
<rect x="808" y="467" width="3" height="5" fill="#b2dfdb"/>
<rect x="813" y="467" width="3" height="5" fill="#26a69a"/>
<rect x="817" y="467" width="3" height="5" fill="#26a69a"/>
<rect x="822" y="466" width="3" height="6" fill="#26a69a"/>
<rect x="827" y="466" width="3" height="6" fill="#26a69a"/>
<rect x="832" y="468" width="3" height="4" fill="#b2dfdb"/>
<rect x="837" y="469" width="3" height="3" fill="#b2dfdb"/>
<rect x="841" y="470" width="3" height="2" fill="#b2dfdb"/>
<rect x="846" y="470" width="3" height="2" fill="#b2dfdb"/>
<rect x="851" y="470" width="3" height="2" fill="#b2dfdb"/>
<rect x="856" y="471" width="3" height="1" fill="#b2dfdb"/>
<rect x="861" y="471" width="3" height="1" fill="#b2dfdb"/>
<rect x="865" y="471" width="3" height="5" fill="#ff5252"/>
<rect x="870" y="471" width="3" height="5" fill="#ff5252"/>
<rect x="875" y="471" width="3" height="5" fill="#ffcdd2"/>
<rect x="880" y="471" width="3" height="6" fill="#ff5252"/>
<rect x="885" y="471" width="3" height="8" fill="#ff5252"/>
<rect x="889" y="471" width="3" height="7" fill="#ff5252"/>
<rect x="894" y="471" width="3" height="9" fill="#ff5252"/>
<rect x="899" y="471" width="3" height="10" fill="#ff5252"/>
<rect x="904" y="471" width="3" height="10" fill="#ffcdd2"/>
<rect x="909" y="471" width="3" height="8" fill="#ffcdd2"/>
<rect x="913" y="471" width="3" height="6" fill="#ffcdd2"/>
<rect x="918" y="471" width="3" height="4" fill="#ffcdd2"/>
<rect x="923" y="471" width="3" height="1" fill="#ffcdd2"/>
<rect x="928" y="470" width="3" height="2" fill="#26a69a"/>
<rect x="933" y="468" width="3" height="4" fill="#26a69a"/>
<rect x="937" y="464" width="3" height="8" fill="#26a69a"/>
<rect x="942" y="459" width="3" height="13" fill="#26a69a"/>
<rect x="947" y="458" width="3" height="14" fill="#26a69a"/>
<rect x="952" y="458" width="3" height="14" fill="#26a69a"/>
<rect x="957" y="459" width="3" height="13" fill="#b2dfdb"/>
<rect x="961" y="460" width="3" height="12" fill="#b2dfdb"/>
<rect x="966" y="462" width="3" height="10" fill="#b2dfdb"/>
<rect x="971" y="463" width="3" height="9" fill="#b2dfdb"/>
<rect x="976" y="464" width="3" height="8" fill="#b2dfdb"/>
<rect x="981" y="466" width="3" height="6" fill="#b2dfdb"/>
<rect x="985" y="466" width="3" height="6" fill="#b2dfdb"/>
<rect x="990" y="470" width="3" height="2" fill="#b2dfdb"/>
<rect x="995" y="471" width="3" height="2" fill="#ff5252"/>
<rect x="1000" y="471" width="3" height="4" fill="#ff5252"/>
<rect x="1005" y="471" width="3" height="5" fill="#ff5252"/>
<rect x="1009" y="471" width="3" height="5" fill="#ff5252"/>
<rect x="1014" y="471" width="3" height="8" fill="#ff5252"/>
<rect x="1019" y="471" width="3" height="8" fill="#ff5252"/>
<rect x="1024" y="471" width="3" height="8" fill="#ffcdd2"/>
<rect x="1029" y="471" width="3" height="3" fill="#ffcdd2"/>
<rect x="1033" y="471" width="3" height="2" fill="#ffcdd2"/>
<rect x="1038" y="469" width="3" height="3" fill="#26a69a"/>
<rect x="1043" y="468" width="3" height="4" fill="#26a69a"/>
<rect x="1048" y="469" width="3" height="3" fill="#b2dfdb"/>
<rect x="1053" y="467" width="3" height="5" fill="#26a69a"/>
<rect x="1057" y="469" width="3" height="3" fill="#b2dfdb"/>
<rect x="1062" y="470" width="3" height="2" fill="#b2dfdb"/>
<rect x="1067" y="470" width="3" height="2" fill="#26a69a"/>
<rect x="0" y="471" width="1190" height="1" fill="url(#dzz)"/>
</g>
<path d="M0.0,486.0C1.2,485.7 5.2,484.8 7.6,484.4C10.0,484.0 12.8,483.8 15.2,483.5C17.6,483.2 20.4,482.9 22.8,482.8C25.2,482.7 28.0,482.7 30.4,482.8C32.8,482.9 35.8,483.2 38.0,483.5C40.2,483.8 42.7,483.9 44.3,484.4C45.9,484.9 46.9,485.9 48.1,486.6C49.3,487.3 50.7,488.3 51.9,488.9C53.1,489.5 54.3,490.0 55.7,490.4C57.1,490.8 59.2,491.2 60.8,491.1C62.4,491.0 64.2,490.1 65.8,489.8C67.4,489.5 69.3,489.3 70.9,489.2C72.5,489.1 74.3,489.3 75.9,488.9C77.5,488.5 79.4,487.2 81.0,486.4C82.6,485.6 84.5,484.6 86.1,483.9C87.7,483.2 89.5,482.4 91.1,482.0C92.7,481.6 94.6,481.4 96.2,481.2C97.8,481.0 99.7,481.1 101.3,480.9C102.9,480.7 104.7,480.5 106.3,479.9C107.9,479.3 109.8,477.9 111.4,477.2C113.0,476.5 114.9,475.9 116.5,475.3C118.1,474.7 119.9,474.4 121.5,473.7C123.1,473.0 125.0,471.9 126.6,471.2C128.2,470.5 130.0,469.6 131.6,469.2C133.2,468.8 135.1,468.7 136.7,468.7C138.3,468.7 140.2,469.0 141.8,469.2C143.4,469.4 145.5,469.6 146.8,469.9C148.1,470.2 148.8,470.4 150.1,470.8C151.4,471.2 153.7,471.3 155.1,472.1C156.5,472.9 157.7,474.4 158.9,475.9C160.1,477.4 161.5,479.9 162.7,481.6C163.9,483.3 165.3,485.3 166.5,486.6C167.7,487.9 168.9,488.3 170.3,489.8C171.7,491.3 173.8,494.4 175.4,496.1C177.0,497.8 178.8,499.4 180.4,500.6C182.0,501.8 184.0,502.8 185.5,503.7C187.0,504.6 188.5,505.9 189.9,506.0C191.3,506.1 192.9,505.1 194.4,504.6C195.9,504.1 197.8,503.5 199.4,503.1C201.0,502.7 202.9,502.0 204.5,501.8C206.1,501.6 208.0,501.6 209.6,501.6C211.2,501.6 213.1,501.6 214.6,502.1C216.1,502.6 217.7,503.4 219.1,505.0C220.5,506.6 222.0,510.1 223.5,512.0C225.0,513.9 226.9,515.7 228.5,517.0C230.1,518.3 232.0,519.3 233.6,520.2C235.2,521.1 237.1,522.2 238.7,522.7C240.3,523.2 242.1,523.0 243.7,523.4C245.3,523.8 247.2,524.7 248.8,525.3C250.4,525.9 252.3,526.7 253.9,527.2C255.5,527.7 257.5,528.1 258.9,528.4C260.3,528.7 261.4,529.2 262.7,529.3C264.0,529.4 265.8,529.5 267.2,529.1C268.6,528.7 270.1,527.6 271.6,526.5C273.1,525.4 275.0,523.6 276.6,522.1C278.2,520.6 280.1,518.5 281.7,517.0C283.3,515.5 285.2,513.9 286.8,512.6C288.4,511.3 290.5,509.7 291.8,508.8C293.1,507.9 293.8,507.8 295.1,507.2C296.4,506.6 298.6,505.6 300.1,504.9C301.6,504.2 303.2,502.6 304.6,502.8C306.0,503.0 307.5,505.4 309.0,506.2C310.5,507.0 312.5,508.0 314.1,508.1C315.7,508.2 317.5,507.2 319.1,506.8C320.7,506.4 322.6,506.0 324.2,505.9C325.8,505.8 327.6,505.7 329.2,506.2C330.8,506.7 332.5,508.4 334.3,509.3C336.1,510.2 338.8,510.8 340.6,511.9C342.4,513.0 343.9,514.6 345.7,516.3C347.5,518.0 350.0,521.0 352.0,522.6C354.0,524.2 356.6,524.6 358.4,526.4C360.2,528.2 361.8,531.4 363.4,534.0C365.0,536.6 367.1,540.2 368.5,542.9C369.9,545.6 371.1,548.9 372.3,551.1C373.5,553.3 374.7,555.4 376.1,556.8C377.5,558.2 379.5,559.6 381.1,559.6C382.7,559.6 384.6,558.3 386.2,556.8C387.8,555.3 389.9,552.7 391.3,550.5C392.7,548.3 393.9,545.5 395.1,542.9C396.3,540.3 397.7,536.6 398.9,534.0C400.1,531.4 401.6,528.2 402.7,526.4C403.8,524.6 404.6,523.4 405.8,522.6C407.0,521.8 408.8,521.6 410.3,521.1C411.8,520.6 413.7,520.4 415.3,519.5C416.9,518.6 418.8,517.0 420.4,515.7C422.0,514.4 423.8,512.5 425.4,511.2C427.0,509.9 428.9,508.7 430.5,507.7C432.1,506.7 434.1,505.8 435.6,504.7C437.1,503.6 438.6,502.5 440.1,500.9C441.6,499.3 443.5,496.4 445.1,494.5C446.7,492.6 448.8,490.2 450.2,488.8C451.6,487.4 452.6,486.5 454.0,485.7C455.4,484.9 457.5,484.6 459.1,483.8C460.7,483.0 462.6,481.3 464.1,480.6C465.6,479.9 467.1,479.4 468.5,479.6C469.9,479.8 471.4,481.5 473.0,481.9C474.6,482.3 477.1,482.3 478.7,481.9C480.3,481.5 481.6,479.8 483.1,479.3C484.6,478.8 486.6,478.7 488.2,478.7C489.8,478.7 491.6,478.7 493.2,479.0C494.8,479.3 496.7,480.1 498.3,480.6C499.9,481.1 501.4,481.7 503.4,481.9C505.4,482.1 508.5,481.8 510.9,481.9C513.3,482.0 516.5,482.0 518.5,482.5C520.5,483.0 522.0,484.2 523.6,485.0C525.2,485.8 527.1,486.8 528.7,487.6C530.3,488.4 532.5,489.3 533.7,489.8C534.9,490.3 534.7,490.8 536.3,491.0C537.9,491.2 541.9,491.1 543.9,491.0C545.9,490.9 547.1,490.5 548.9,490.4C550.7,490.3 553.7,490.5 555.3,490.1C556.9,489.7 557.9,488.6 559.1,488.2C560.3,487.8 561.4,487.6 562.8,487.9C564.2,488.2 566.1,489.5 567.9,490.1C569.7,490.7 572.2,491.2 574.2,491.4C576.2,491.6 578.9,491.5 580.6,491.4C582.3,491.3 583.6,491.4 585.1,490.7C586.6,490.0 588.5,488.2 590.1,486.9C591.7,485.6 593.6,483.8 595.2,482.5C596.8,481.2 598.7,479.8 600.3,478.7C601.9,477.6 603.7,476.8 605.3,475.9C606.9,475.0 608.8,474.2 610.4,473.0C612.0,471.8 613.8,469.7 615.4,468.6C617.0,467.5 618.9,466.8 620.5,466.1C622.1,465.4 624.0,465.0 625.6,464.5C627.2,464.0 629.0,463.4 630.6,462.9C632.2,462.4 634.1,462.2 635.7,461.6C637.3,461.0 639.2,459.6 640.8,459.1C642.4,458.6 644.2,458.3 645.8,458.5C647.4,458.7 649.3,459.7 650.9,460.4C652.5,461.1 654.3,462.1 655.9,462.9C657.5,463.7 659.4,464.7 661.0,465.4C662.6,466.1 664.5,466.7 666.1,467.1C667.7,467.5 669.7,467.7 671.1,467.9C672.5,468.1 673.7,468.1 674.9,468.6C676.1,469.1 677.5,470.3 678.7,470.9C679.9,471.5 681.1,472.2 682.5,472.4C683.9,472.6 685.8,472.4 687.6,472.4C689.4,472.4 691.9,472.1 693.9,472.1C695.9,472.1 698.7,472.2 700.3,472.6C701.9,473.0 702.9,473.8 704.1,474.3C705.3,474.8 706.4,475.5 707.8,475.9C709.2,476.3 711.1,476.6 712.9,476.8C714.7,477.0 717.4,477.3 719.2,477.4C721.0,477.5 722.4,477.7 724.3,477.7C726.2,477.7 729.2,477.3 731.3,477.4C733.4,477.5 735.9,477.6 737.7,478.1C739.5,478.6 741.1,480.0 742.7,480.6C744.3,481.2 745.8,481.8 747.8,481.9C749.8,482.0 753.2,481.4 755.4,481.5C757.6,481.6 759.9,482.1 761.7,482.3C763.5,482.5 765.0,482.9 766.8,482.8C768.6,482.7 771.3,482.3 773.1,481.9C774.9,481.5 776.6,480.6 778.2,480.0C779.8,479.4 781.4,478.6 783.2,478.1C785.0,477.6 787.6,477.3 789.6,476.8C791.6,476.3 793.9,475.7 795.9,475.2C797.9,474.7 800.2,474.0 802.2,473.6C804.2,473.2 806.5,472.7 808.5,472.4C810.5,472.1 813.1,471.9 814.9,471.7C816.7,471.5 818.5,471.3 819.9,470.9C821.3,470.5 822.3,469.5 823.7,469.0C825.1,468.5 827.0,467.9 828.8,467.7C830.6,467.5 833.1,467.6 835.1,467.6C837.1,467.6 839.5,467.7 841.5,467.6C843.5,467.5 846.0,467.1 847.8,467.1C849.6,467.1 851.0,467.6 852.8,467.9C854.6,468.2 857.6,468.3 859.2,468.8C860.8,469.3 861.8,470.0 863.0,470.9C864.2,471.8 865.6,473.4 866.8,474.3C868.0,475.2 869.3,475.8 870.6,476.4C871.9,477.0 873.6,477.5 875.1,478.1C876.6,478.7 878.5,479.2 880.1,480.0C881.7,480.8 883.6,482.2 885.2,483.1C886.8,484.0 888.7,484.7 890.3,485.7C891.9,486.7 893.7,488.3 895.3,489.5C896.9,490.7 899.0,492.4 900.4,493.3C901.8,494.2 902.8,494.6 904.2,494.9C905.6,495.2 907.6,495.3 909.2,495.2C910.8,495.1 912.5,494.8 914.3,494.5C916.1,494.2 918.8,494.2 920.6,493.6C922.4,493.0 924.3,491.6 925.7,490.7C927.1,489.8 928.3,488.9 929.5,488.2C930.7,487.5 932.1,487.2 933.3,486.3C934.5,485.4 935.9,484.0 937.1,482.5C938.3,481.0 939.7,478.5 940.9,476.8C942.1,475.1 943.5,473.1 944.7,471.7C945.9,470.3 947.1,469.0 948.5,467.9C949.9,466.8 951.9,465.6 953.5,464.8C955.1,464.0 956.8,463.4 958.6,462.9C960.4,462.4 962.9,461.9 964.9,461.6C966.9,461.3 969.1,461.1 971.3,461.0C973.5,460.9 976.4,461.0 978.9,461.0C981.4,461.0 985.3,460.5 987.1,460.7C988.9,460.9 989.0,461.4 990.3,462.3C991.6,463.2 993.7,465.1 995.3,466.1C996.9,467.1 998.8,468.0 1000.4,468.6C1002.0,469.2 1003.8,469.6 1005.4,470.1C1007.0,470.6 1009.2,471.0 1010.5,471.7C1011.8,472.4 1012.7,473.3 1013.8,474.3C1014.9,475.3 1016.4,477.1 1017.6,478.1C1018.8,479.1 1020.2,480.1 1021.4,480.6C1022.6,481.1 1024.0,481.3 1025.2,481.2C1026.4,481.1 1027.6,480.6 1029.0,480.0C1030.4,479.4 1032.5,478.2 1034.1,477.2C1035.7,476.2 1037.5,474.8 1039.1,473.9C1040.7,473.0 1042.6,471.9 1044.2,471.4C1045.8,470.9 1047.6,470.9 1049.2,470.5C1050.8,470.1 1052.9,468.9 1054.3,468.8C1055.7,468.7 1056.7,469.3 1058.1,469.6C1059.5,469.9 1061.5,470.3 1063.2,470.5C1064.9,470.7 1068.0,470.8 1068.9,470.9" fill="none" stroke="#ffffff" stroke-width="2.0" stroke-linejoin="round" stroke-linecap="round"/>
<path d="M0.0,490.4C1.2,490.1 5.2,489.1 7.6,488.5C10.0,487.9 12.8,487.3 15.2,486.9C17.6,486.5 20.4,486.1 22.8,485.8C25.2,485.5 28.0,485.3 30.4,485.1C32.8,484.9 35.8,484.8 38.0,484.7C40.2,484.6 42.7,484.5 44.3,484.5C45.9,484.5 46.9,484.5 48.1,484.7C49.3,484.9 50.7,485.3 51.9,485.6C53.1,485.9 54.3,486.1 55.7,486.4C57.1,486.7 59.2,487.1 60.8,487.3C62.4,487.5 64.2,487.8 65.8,487.9C67.4,488.0 69.3,488.2 70.9,488.2C72.5,488.2 74.3,488.2 75.9,488.2C77.5,488.2 79.4,488.1 81.0,487.9C82.6,487.7 84.5,487.3 86.1,487.0C87.7,486.7 89.5,486.3 91.1,486.0C92.7,485.7 94.6,485.4 96.2,485.1C97.8,484.8 99.7,484.6 101.3,484.4C102.9,484.2 104.7,484.0 106.3,483.6C107.9,483.2 109.8,482.7 111.4,482.2C113.0,481.7 114.9,481.1 116.5,480.6C118.1,480.1 119.9,479.6 121.5,479.1C123.1,478.6 125.0,477.8 126.6,477.2C128.2,476.6 130.0,475.9 131.6,475.3C133.2,474.7 135.1,474.1 136.7,473.7C138.3,473.3 140.2,472.8 141.8,472.5C143.4,472.2 145.3,471.8 146.8,471.8C148.3,471.8 149.6,472.3 151.3,472.5C153.0,472.7 155.9,472.7 157.7,473.1C159.5,473.5 161.1,474.5 162.7,475.3C164.3,476.1 166.2,477.4 167.8,478.4C169.4,479.4 171.2,480.6 172.8,481.6C174.4,482.6 176.3,483.6 177.9,484.7C179.5,485.8 181.4,487.4 183.0,488.5C184.6,489.6 186.4,490.8 188.0,491.7C189.6,492.6 191.5,493.3 193.1,494.0C194.7,494.7 196.6,495.3 198.2,495.8C199.8,496.3 201.6,496.8 203.2,497.2C204.8,497.6 206.7,498.1 208.3,498.4C209.9,498.7 211.8,498.9 213.4,499.1C215.0,499.3 216.8,499.4 218.4,499.9C220.0,500.4 221.9,501.6 223.5,502.5C225.1,503.4 226.9,504.5 228.5,505.6C230.1,506.7 232.0,508.1 233.6,509.1C235.2,510.1 237.1,510.9 238.7,511.7C240.3,512.5 242.1,513.4 243.7,514.2C245.3,515.0 247.2,515.8 248.8,516.6C250.4,517.4 252.3,518.2 253.9,518.9C255.5,519.6 257.3,520.4 258.9,521.1C260.5,521.8 262.4,522.5 264.0,523.0C265.6,523.5 267.5,523.8 269.1,524.0C270.7,524.2 272.5,524.2 274.1,524.0C275.7,523.8 277.6,523.2 279.2,522.7C280.8,522.2 282.6,521.4 284.2,520.8C285.8,520.2 287.6,519.3 289.3,518.7C291.0,518.1 293.4,517.6 295.1,516.9C296.8,516.2 298.5,515.2 300.1,514.4C301.7,513.6 303.6,512.5 305.2,511.9C306.8,511.3 308.7,510.9 310.3,510.6C311.9,510.3 313.7,510.4 315.3,510.2C316.9,510.0 318.8,509.5 320.4,509.3C322.0,509.1 323.8,508.8 325.4,508.7C327.0,508.6 328.9,508.5 330.5,508.5C332.1,508.5 334.0,508.6 335.6,508.7C337.2,508.8 339.0,508.9 340.6,509.1C342.2,509.3 344.1,509.7 345.7,510.2C347.3,510.7 349.2,511.7 350.8,512.5C352.4,513.3 354.2,514.2 355.8,515.0C357.4,515.8 359.3,516.5 360.9,517.6C362.5,518.7 364.3,520.4 365.9,522.0C367.5,523.6 369.4,525.7 371.0,527.7C372.6,529.7 374.5,532.8 376.1,534.7C377.7,536.6 379.5,538.3 381.1,539.7C382.7,541.1 384.6,542.5 386.2,543.3C387.8,544.1 389.7,544.6 391.3,544.8C392.9,545.0 394.7,544.9 396.3,544.4C397.9,543.9 399.8,542.7 401.4,541.6C403.0,540.5 404.9,538.9 406.5,537.8C408.1,536.7 409.9,535.7 411.5,534.7C413.1,533.7 415.0,532.6 416.6,531.5C418.2,530.4 420.0,529.1 421.6,527.9C423.2,526.7 425.1,525.1 426.7,523.9C428.3,522.7 430.2,521.3 431.8,520.1C433.4,518.9 435.5,517.4 436.8,516.6C438.1,515.8 438.8,516.2 440.1,515.4C441.4,514.6 443.5,512.9 445.1,511.6C446.7,510.3 448.6,508.6 450.2,507.2C451.8,505.8 453.7,504.1 455.3,502.8C456.9,501.5 458.7,500.2 460.3,499.0C461.9,497.8 463.8,496.3 465.4,495.2C467.0,494.1 468.8,492.9 470.4,492.0C472.0,491.1 473.9,490.2 475.5,489.5C477.1,488.8 479.0,488.2 480.6,487.6C482.2,487.0 484.0,486.2 485.6,485.7C487.2,485.2 489.1,484.6 490.7,484.2C492.3,483.8 494.2,483.3 495.8,483.1C497.4,482.9 498.8,482.9 500.8,482.8C502.8,482.7 506.0,482.5 508.4,482.5C510.8,482.5 513.6,482.4 516.0,482.5C518.4,482.6 521.6,482.7 523.6,482.9C525.6,483.1 527.1,483.5 528.7,483.8C530.3,484.1 532.1,484.6 533.7,485.0C535.3,485.4 537.2,485.9 538.8,486.3C540.4,486.7 542.3,487.0 543.9,487.3C545.5,487.6 547.1,488.0 548.9,488.2C550.7,488.4 553.3,488.7 555.3,488.8C557.3,488.9 559.6,488.7 561.6,488.8C563.6,488.9 565.9,489.0 567.9,489.2C569.9,489.4 572.2,489.7 574.2,489.8C576.2,489.9 578.9,490.1 580.6,490.1C582.3,490.1 583.6,489.9 585.1,489.8C586.6,489.7 588.5,489.8 590.1,489.5C591.7,489.2 593.6,488.7 595.2,488.2C596.8,487.7 598.7,486.9 600.3,486.3C601.9,485.7 603.7,485.0 605.3,484.2C606.9,483.4 608.8,482.3 610.4,481.5C612.0,480.7 613.8,479.8 615.4,479.0C617.0,478.2 618.9,477.2 620.5,476.4C622.1,475.6 624.0,474.6 625.6,473.9C627.2,473.2 629.0,472.7 630.6,472.0C632.2,471.3 634.1,470.4 635.7,469.6C637.3,468.8 639.2,468.0 640.8,467.3C642.4,466.6 644.2,465.8 645.8,465.4C647.4,465.0 649.3,464.9 650.9,464.8C652.5,464.7 654.3,464.5 655.9,464.5C657.5,464.5 659.4,464.7 661.0,464.8C662.6,464.9 664.5,464.9 666.1,465.0C667.7,465.1 669.5,465.2 671.1,465.4C672.7,465.6 674.6,465.8 676.2,466.1C677.8,466.4 679.7,466.9 681.3,467.3C682.9,467.7 684.7,468.3 686.3,468.6C687.9,468.9 689.8,469.0 691.4,469.2C693.0,469.4 694.9,469.5 696.5,469.8C698.1,470.1 699.9,470.6 701.5,470.9C703.1,471.2 705.0,471.4 706.6,471.7C708.2,472.0 710.0,472.3 711.6,472.6C713.2,472.9 715.1,473.1 716.7,473.4C718.3,473.7 720.2,474.1 721.8,474.3C723.4,474.5 725.3,474.7 726.8,474.9C728.3,475.1 729.6,475.3 731.3,475.5C733.0,475.7 735.7,476.0 737.7,476.4C739.7,476.8 742.0,477.4 744.0,477.8C746.0,478.2 748.3,478.5 750.3,478.7C752.3,478.9 754.6,479.1 756.6,479.3C758.6,479.5 761.0,479.9 763.0,480.0C765.0,480.1 767.3,480.2 769.3,480.2C771.3,480.2 773.6,480.2 775.6,480.2C777.6,480.2 780.0,480.1 782.0,480.0C784.0,479.9 786.3,479.5 788.3,479.3C790.3,479.1 792.6,478.9 794.6,478.7C796.6,478.5 798.9,478.1 800.9,477.8C802.9,477.5 805.3,477.1 807.3,476.8C809.3,476.5 811.6,476.1 813.6,475.8C815.6,475.5 817.9,475.1 819.9,474.7C821.9,474.3 824.3,473.8 826.3,473.3C828.3,472.8 830.6,472.1 832.6,471.7C834.6,471.3 836.9,470.8 838.9,470.5C840.9,470.2 843.3,469.8 845.3,469.6C847.3,469.4 849.6,469.1 851.6,469.0C853.6,468.9 856.1,468.7 857.9,468.7C859.7,468.7 861.6,468.6 863.0,468.8C864.4,469.0 865.6,469.4 866.8,469.8C868.0,470.2 869.3,470.7 870.6,471.1C871.9,471.5 873.6,471.9 875.1,472.4C876.6,472.9 878.5,473.7 880.1,474.3C881.7,474.9 883.6,475.5 885.2,476.2C886.8,476.9 888.7,477.9 890.3,478.7C891.9,479.5 893.7,480.4 895.3,481.2C896.9,482.0 898.8,483.0 900.4,483.8C902.0,484.6 903.8,485.5 905.4,486.1C907.0,486.7 908.9,487.3 910.5,487.8C912.1,488.3 914.0,488.8 915.6,489.1C917.2,489.4 919.0,489.6 920.6,489.8C922.2,490.0 924.1,490.1 925.7,490.1C927.3,490.1 929.2,490.0 930.8,489.8C932.4,489.6 934.2,489.3 935.8,488.8C937.4,488.3 939.3,487.7 940.9,486.9C942.5,486.1 944.3,484.9 945.9,483.8C947.5,482.7 949.4,481.2 951.0,480.0C952.6,478.8 954.5,477.4 956.1,476.4C957.7,475.4 959.5,474.5 961.1,473.6C962.7,472.7 964.6,471.7 966.2,470.9C967.8,470.1 969.7,469.2 971.3,468.6C972.9,468.0 974.7,467.4 976.3,466.9C977.9,466.4 979.8,465.8 981.4,465.4C983.0,465.0 984.9,464.6 986.5,464.5C988.1,464.4 989.9,464.5 991.5,464.5C993.1,464.5 995.0,464.7 996.6,464.8C998.2,464.9 1000.0,465.2 1001.6,465.4C1003.2,465.6 1005.1,466.0 1006.7,466.3C1008.3,466.6 1010.5,466.8 1011.8,467.3C1013.1,467.8 1013.8,468.5 1015.1,469.2C1016.4,469.9 1018.5,470.9 1020.1,471.7C1021.7,472.5 1023.6,473.3 1025.2,473.9C1026.8,474.5 1028.7,475.0 1030.3,475.2C1031.9,475.4 1033.7,475.3 1035.3,475.2C1036.9,475.1 1038.8,474.6 1040.4,474.3C1042.0,474.0 1043.8,473.7 1045.4,473.4C1047.0,473.1 1048.9,472.8 1050.5,472.6C1052.1,472.4 1054.0,472.3 1055.6,472.1C1057.2,471.9 1059.0,471.6 1060.6,471.5C1062.2,471.4 1064.4,471.5 1065.7,471.4C1067.0,471.3 1068.4,471.1 1068.9,471.1" fill="none" stroke="#2962ff" stroke-width="2.0" stroke-linejoin="round" stroke-linecap="round"/>
<polyline points="0.0,655.2 6.3,654.9 12.7,655.2 17.1,657.1 20.9,654.8 27.2,653.0 31.6,654.6 36.7,657.7 41.8,660.3 46.2,662.2 50.6,667.8 54.4,670.0 58.2,670.1 61.4,668.2 64.6,662.2 69.0,656.5 72.2,654.3 75.9,653.0 81.0,648.9 86.1,642.5 89.2,638.4 93.7,638.1 98.7,640.6 103.2,642.9 108.2,640.9 112.0,633.0 117.1,628.0 122.2,625.2 127.2,615.9 131.6,614.3 136.7,613.4 142.4,615.3 146.8,626.7 147.5,627.3 152.6,633.0 157.0,638.7 160.8,653.9 165.9,662.4 171.6,664.1 180.4,664.4 185.5,662.2 189.3,662.8 193.7,657.1 199.4,652.7 205.1,651.4 209.6,653.0 214.0,656.5 218.4,665.3 223.5,667.8 231.1,664.9 238.7,664.9 243.7,664.7 248.8,667.5 256.4,672.3 261.5,673.3 266.5,672.5 271.6,669.1 276.6,664.1 281.7,660.9 288.0,658.7 296.3,657.5 301.4,659.4 305.2,659.4 309.0,663.9 315.3,664.5 320.4,662.0 329.2,660.4 333.7,666.4 339.4,668.3 344.4,670.6 349.5,675.9 353.3,678.2 358.4,679.7 362.8,679.9 367.2,681.6 372.9,682.0 377.3,675.3 382.4,669.6 387.5,662.6 392.5,651.8 397.6,641.7 402.0,634.7 406.2,630.7 410.3,633.5 415.9,636.6 421.6,635.1 428.0,634.1 434.3,633.9 440.1,632.4 445.1,628.0 449.6,625.2 454.0,623.5 459.1,624.4 463.5,623.2 469.2,623.2 473.6,627.0 478.0,625.8 483.1,621.0 488.2,620.4 493.2,621.4 497.0,623.2 501.5,621.9 507.2,617.8 512.2,614.7 516.6,611.9 521.1,612.2 526.1,615.9 531.2,618.5 536.3,622.3 542.0,621.4 545.1,629.2 550.2,634.3 554.6,645.1 560.3,645.7 564.1,652.7 569.2,662.2 574.2,664.1 579.3,664.4 583.8,666.0 587.6,661.9 592.7,649.3 597.7,640.4 602.8,635.4 607.8,632.2 611.6,628.4 616.7,618.7 621.8,616.4 626.8,611.1 631.9,607.8 635.7,603.7 640.8,595.5 645.8,593.8 650.9,602.5 655.9,611.7 659.7,613.2 666.1,617.4 671.1,618.3 674.9,617.9 680.0,626.5 683.8,629.3 688.9,623.3 693.9,623.1 698.4,623.3 704.1,627.8 707.8,634.1 712.9,634.7 718.0,637.3 722.4,637.3 728.2,633.7 732.0,637.8 737.0,637.8 741.5,653.9 747.2,661.5 751.6,661.5 756.0,659.4 761.1,664.7 766.1,666.6 771.2,662.2 775.6,660.6 780.7,655.2 785.1,650.1 789.6,649.5 794.0,648.2 799.7,646.7 804.1,642.5 809.2,642.9 813.6,640.0 819.3,633.7 823.7,625.2 828.2,620.4 832.6,623.2 837.7,624.8 842.7,626.1 847.8,617.2 852.2,619.4 856.6,623.2 861.7,620.1 864.2,628.0 866.8,639.7 871.8,641.9 872.5,641.6 876.3,640.4 881.4,644.4 885.8,659.0 890.9,662.8 895.3,669.1 900.4,672.9 905.2,674.2 909.9,667.8 914.3,660.9 920.0,659.4 924.4,648.9 929.5,645.4 933.9,641.3 939.0,624.2 944.1,608.7 948.5,607.7 953.5,605.4 958.6,606.2 963.0,605.8 967.5,609.0 972.5,609.6 977.6,610.9 982.0,610.9 987.1,609.9 992.2,619.7 996.6,625.7 1001.0,632.2 1006.1,633.4 1011.1,635.2 1015.7,646.3 1020.1,654.3 1025.2,653.0 1030.3,643.2 1035.3,633.7 1039.7,626.1 1044.2,622.7 1048.6,624.2 1053.7,621.4 1058.7,626.7 1063.8,630.5 1068.9,629.5" fill="none" stroke="#ff00ff" stroke-width="2.0" stroke-linejoin="round" stroke-linecap="round" />
<path d="M0.0,658.6C1.2,658.3 5.2,657.3 7.6,656.8C10.0,656.3 12.8,655.9 15.2,655.6C17.6,655.3 20.4,655.2 22.8,655.2C25.2,655.2 28.0,655.4 30.4,655.6C32.8,655.8 35.6,656.2 38.0,656.5C40.4,656.8 43.4,657.0 45.6,657.3C47.8,657.6 50.1,658.3 51.9,658.6C53.7,658.9 55.2,659.3 57.0,659.4C58.8,659.5 61.3,659.5 63.3,659.4C65.3,659.3 67.6,658.9 69.6,658.7C71.6,658.5 73.9,658.6 75.9,658.4C77.9,658.2 80.3,657.7 82.3,657.3C84.3,656.9 86.6,656.0 88.6,655.6C90.6,655.2 92.9,654.9 94.9,654.6C96.9,654.3 99.3,654.2 101.3,653.9C103.3,653.6 105.6,653.4 107.6,652.9C109.6,652.4 111.7,651.6 113.9,650.8C116.1,650.0 119.1,649.3 121.5,648.2C123.9,647.1 126.9,645.1 129.1,643.8C131.3,642.5 133.4,641.3 135.4,640.0C137.4,638.7 140.0,636.8 141.8,635.8C143.6,634.8 145.3,634.2 146.8,633.7C148.3,633.2 149.8,632.6 151.3,632.4C152.8,632.2 154.8,632.1 156.4,632.4C158.0,632.7 159.3,633.6 161.5,634.3C163.7,635.0 167.7,635.8 170.3,636.6C172.9,637.4 175.5,638.6 177.9,639.4C180.3,640.2 183.1,640.9 185.5,641.3C187.9,641.7 190.9,641.5 193.1,641.6C195.3,641.7 197.4,641.8 199.4,642.2C201.4,642.6 203.6,643.5 205.8,644.4C208.0,645.3 211.2,646.4 213.4,647.6C215.6,648.8 217.7,650.7 219.7,652.0C221.7,653.3 223.8,654.5 226.0,655.8C228.2,657.1 231.4,659.1 233.6,660.0C235.8,660.9 237.9,661.1 239.9,661.5C241.9,661.9 244.1,662.5 246.3,662.8C248.5,663.1 251.1,663.1 253.9,663.2C256.7,663.3 260.8,663.6 264.0,663.7C267.2,663.8 270.9,663.6 274.1,663.7C277.3,663.8 280.4,663.8 284.2,664.1C288.0,664.4 294.2,665.3 297.6,665.5C301.0,665.7 302.4,665.7 305.2,665.5C308.0,665.3 311.7,664.8 315.3,664.5C318.9,664.2 324.4,663.9 328.0,663.9C331.6,663.9 335.1,664.4 338.1,664.5C341.1,664.6 343.8,664.4 347.0,664.7C350.2,665.0 355.4,665.8 358.4,666.4C361.4,667.0 363.7,668.1 365.9,668.7C368.1,669.3 370.3,669.9 372.3,670.2C374.3,670.5 376.4,670.8 378.6,670.8C380.8,670.8 384.0,670.7 386.2,670.4C388.4,670.1 390.7,669.4 392.5,668.9C394.3,668.4 395.8,667.9 397.6,667.0C399.4,666.1 401.7,664.1 403.9,663.2C406.1,662.3 408.9,661.9 411.5,661.3C414.1,660.7 418.0,660.0 420.4,659.2C422.8,658.4 424.7,657.0 426.7,656.0C428.7,655.0 430.5,654.3 433.0,653.1C435.5,651.9 439.8,649.9 442.6,648.2C445.4,646.5 447.8,644.2 450.2,642.5C452.6,640.8 455.4,639.3 457.8,637.8C460.2,636.3 463.0,634.3 465.4,633.0C467.8,631.7 470.6,630.7 473.0,629.9C475.4,629.1 478.2,628.4 480.6,628.0C483.0,627.6 485.6,627.3 488.2,627.1C490.8,626.9 494.6,627.2 497.0,627.0C499.4,626.8 501.2,626.3 503.4,625.7C505.6,625.1 508.5,624.2 510.9,623.5C513.3,622.8 516.1,621.9 518.5,621.4C520.9,620.9 523.7,620.6 526.1,620.4C528.5,620.2 531.3,620.1 533.7,620.1C536.1,620.1 538.9,619.9 541.3,620.1C543.7,620.3 546.7,620.9 548.9,621.6C551.1,622.3 553.3,623.5 555.3,624.2C557.3,624.9 559.6,625.3 561.6,626.1C563.6,626.9 566.1,628.0 567.9,629.0C569.7,630.0 571.2,631.4 573.0,632.4C574.8,633.4 577.2,634.3 579.3,635.3C581.4,636.3 583.8,637.7 586.3,638.5C588.8,639.3 592.4,639.7 595.2,640.2C598.0,640.7 601.5,641.3 604.1,641.7C606.7,642.1 608.8,643.0 611.6,643.0C614.4,643.0 618.6,641.9 621.8,641.4C625.0,640.9 629.3,640.7 631.9,639.8C634.5,638.9 636.0,637.5 638.2,636.0C640.4,634.5 643.2,631.8 645.8,630.3C648.4,628.8 652.5,628.0 654.7,626.9C656.9,625.8 657.7,624.5 659.7,623.3C661.7,622.1 664.9,620.4 667.3,619.2C669.7,618.0 672.3,616.8 674.9,616.1C677.5,615.4 681.2,615.4 683.8,615.1C686.4,614.8 689.0,614.7 691.4,614.5C693.8,614.3 697.0,614.0 699.0,614.1C701.0,614.2 702.7,614.5 704.1,614.9C705.5,615.3 706.4,616.3 707.8,616.8C709.2,617.3 711.1,617.7 712.9,618.3C714.7,618.9 717.2,620.0 719.2,620.8C721.2,621.6 724.3,622.6 725.6,623.0C726.9,623.4 726.4,622.6 727.5,623.2C728.6,623.8 730.6,625.7 732.6,627.0C734.6,628.3 737.8,629.8 740.2,631.1C742.6,632.4 745.4,634.0 747.8,635.2C750.2,636.4 752.6,637.2 755.4,638.7C758.2,640.2 762.7,643.5 765.5,644.7C768.3,645.9 770.7,645.2 773.1,645.9C775.5,646.6 778.5,648.2 780.7,648.9C782.9,649.6 785.0,649.6 787.0,650.1C789.0,650.6 790.8,651.5 793.4,651.8C796.0,652.1 799.5,652.0 803.5,652.0C807.5,652.0 814.9,652.3 818.7,651.8C822.5,651.3 824.7,650.1 827.5,648.9C830.3,647.7 834.0,645.5 836.4,644.4C838.8,643.3 840.3,643.4 842.7,642.2C845.1,641.0 848.8,638.6 851.6,637.1C854.4,635.6 858.0,633.8 860.4,633.0C862.8,632.2 863.6,632.5 866.8,632.4C870.0,632.3 876.5,632.0 880.1,632.4C883.7,632.8 886.4,634.0 889.0,634.9C891.6,635.8 894.2,637.1 896.6,638.1C899.0,639.1 901.6,640.2 904.2,641.3C906.8,642.4 910.4,643.6 913.0,644.7C915.6,645.8 918.4,647.4 920.6,648.0C922.8,648.6 925.0,648.3 927.0,648.5C929.0,648.7 931.4,649.1 933.3,649.2C935.2,649.3 937.0,649.4 939.0,648.9C941.0,648.4 943.7,646.6 945.9,645.9C948.1,645.2 950.7,645.5 952.9,644.7C955.1,643.9 957.6,642.0 959.9,640.9C962.2,639.8 965.5,638.9 967.5,638.1C969.5,637.3 970.7,636.7 972.5,635.6C974.3,634.5 976.7,632.9 978.9,631.5C981.1,630.1 983.7,628.3 986.5,626.7C989.3,625.1 993.8,622.7 996.6,621.6C999.4,620.5 1001.9,620.6 1004.2,620.1C1006.5,619.6 1008.6,618.2 1011.1,618.5C1013.6,618.8 1017.4,621.1 1020.1,621.9C1022.8,622.7 1025.3,622.8 1027.7,623.5C1030.1,624.2 1033.1,625.8 1035.3,626.3C1037.5,626.8 1039.4,626.4 1041.6,626.7C1043.8,627.0 1047.0,627.7 1049.2,628.0C1051.4,628.3 1053.4,628.1 1055.6,628.6C1057.8,629.1 1061.1,630.5 1063.2,631.1C1065.3,631.7 1068.0,632.2 1068.9,632.4" fill="none" stroke="#ffffff" stroke-width="2.0" stroke-linejoin="round" stroke-linecap="round"/>
<g shape-rendering="crispEdges">
<rect x="0" y="585" width="1190" height="1" fill="url(#dgr)"/>
<rect x="0" y="676" width="1190" height="1" fill="url(#dgr)"/>
<rect x="0" y="598" width="1190" height="1" fill="url(#dor)"/>
<rect x="0" y="663" width="1190" height="1" fill="url(#dor)"/>
<rect x="0" y="631" width="1190" height="1" fill="url(#dcy)"/>
</g>
<line x1="353.2" y1="690.7" x2="373" y2="690.7" stroke="#ff0000" stroke-width="8.3" stroke-linecap="round"/>
<g opacity="0.995">
<circle cx="17" cy="12.95" r="8.9" fill="#061d1a"/>
<circle cx="17" cy="12.95" r="4.15" fill="#0a9b82"/>
<text x="33.8" y="18.2" font-size="13" fill="#cfd1d6" font-weight="normal" font-family="'Liberation Sans', 'Noto Sans CJK SC', sans-serif" stroke="#cfd1d6" stroke-width="0.3">开</text>
<text x="47.3" y="18.2" font-size="13" fill="#cfd1d6" font-weight="normal" font-family="'Liberation Sans', 'Noto Sans CJK SC', sans-serif" textLength="5.9" lengthAdjust="spacingAndGlyphs" >=</text>
<text x="55.4" y="18.2" font-size="13" fill="#0f9f86" font-weight="normal" font-family="'Liberation Sans', 'Noto Sans CJK SC', sans-serif" textLength="55.5" lengthAdjust="spacingAndGlyphs" stroke="#0f9f86" stroke-width="0.25">65,958.92</text>
<text x="118.0" y="18.2" font-size="13" fill="#cfd1d6" font-weight="normal" font-family="'Liberation Sans', 'Noto Sans CJK SC', sans-serif" stroke="#cfd1d6" stroke-width="0.3">高</text>
<text x="131.4" y="18.2" font-size="13" fill="#cfd1d6" font-weight="normal" font-family="'Liberation Sans', 'Noto Sans CJK SC', sans-serif" textLength="5.9" lengthAdjust="spacingAndGlyphs" >=</text>
<text x="139.1" y="18.2" font-size="13" fill="#0f9f86" font-weight="normal" font-family="'Liberation Sans', 'Noto Sans CJK SC', sans-serif" textLength="56.1" lengthAdjust="spacingAndGlyphs" stroke="#0f9f86" stroke-width="0.25">67,093.89</text>
<text x="202.4" y="18.2" font-size="13" fill="#cfd1d6" font-weight="normal" font-family="'Liberation Sans', 'Noto Sans CJK SC', sans-serif" stroke="#cfd1d6" stroke-width="0.3">低</text>
<text x="215.6" y="18.2" font-size="13" fill="#cfd1d6" font-weight="normal" font-family="'Liberation Sans', 'Noto Sans CJK SC', sans-serif" textLength="5.9" lengthAdjust="spacingAndGlyphs" >=</text>
<text x="222.8" y="18.2" font-size="13" fill="#0f9f86" font-weight="normal" font-family="'Liberation Sans', 'Noto Sans CJK SC', sans-serif" textLength="55.9" lengthAdjust="spacingAndGlyphs" stroke="#0f9f86" stroke-width="0.25">65,933.11</text>
<text x="287.0" y="18.2" font-size="13" fill="#cfd1d6" font-weight="normal" font-family="'Liberation Sans', 'Noto Sans CJK SC', sans-serif" stroke="#cfd1d6" stroke-width="0.3">收</text>
<text x="299.9" y="18.2" font-size="13" fill="#cfd1d6" font-weight="normal" font-family="'Liberation Sans', 'Noto Sans CJK SC', sans-serif" textLength="5.9" lengthAdjust="spacingAndGlyphs" >=</text>
<text x="307.7" y="18.2" font-size="13" fill="#0f9f86" font-weight="normal" font-family="'Liberation Sans', 'Noto Sans CJK SC', sans-serif" textLength="55.7" lengthAdjust="spacingAndGlyphs" stroke="#0f9f86" stroke-width="0.25">66,512.10</text>
<text x="371.2" y="18.2" font-size="13" fill="#0f9f86" font-weight="normal" font-family="'Liberation Sans', 'Noto Sans CJK SC', sans-serif" textLength="44.3" lengthAdjust="spacingAndGlyphs" stroke="#0f9f86" stroke-width="0.25">+659.87</text>
<text x="421.2" y="18.2" font-size="13" fill="#0f9f86" font-weight="normal" font-family="'Liberation Sans', 'Noto Sans CJK SC', sans-serif" textLength="47.2" lengthAdjust="spacingAndGlyphs" stroke="#0f9f86" stroke-width="0.25">(+1.00%)</text>
<text x="672.4" y="252" font-size="14" fill="#ffffff" font-weight="bold" font-family="'Liberation Sans', 'Noto Sans CJK SC', sans-serif" textLength="36.6" lengthAdjust="spacingAndGlyphs" >72300</text>
<text x="666.9" y="393" font-size="14" fill="#ffffff" font-weight="bold" font-family="'Liberation Sans', 'Noto Sans CJK SC', sans-serif" textLength="36.8" lengthAdjust="spacingAndGlyphs" >62500</text>
<text x="854.6" y="283" font-size="13.8" fill="#e6e6e6" font-weight="bold" font-family="'Liberation Sans', 'Noto Sans CJK SC', sans-serif" textLength="27.6" lengthAdjust="spacingAndGlyphs" >中枢</text>
<text x="9.2" y="462" font-size="12.6" fill="#cfd1d6" font-weight="normal" font-family="'Liberation Sans', 'Noto Sans CJK SC', sans-serif" textLength="87" lengthAdjust="spacingAndGlyphs" stroke="#cfd1d6" stroke-width="0.3">动能量化_Cody</text>
<text x="100" y="462" font-size="13" fill="#8a8c93" font-weight="normal" font-family="'Liberation Sans', 'Noto Sans CJK SC', sans-serif" textLength="63" lengthAdjust="spacingAndGlyphs" >12 26 close</text>
<text x="9.8" y="594" font-size="12.6" fill="#cfd1d6" font-weight="normal" font-family="'Liberation Sans', 'Noto Sans CJK SC', sans-serif" textLength="110.6" lengthAdjust="spacingAndGlyphs" stroke="#cfd1d6" stroke-width="0.3">价差交易模型_cody</text>
<text x="124.2" y="594" font-size="13" fill="#8a8c93" font-weight="normal" font-family="'Liberation Sans', 'Noto Sans CJK SC', sans-serif" textLength="12.6" lengthAdjust="spacingAndGlyphs" >35</text>
<g fill="#d8d8d8" stroke="#000" stroke-width="4.6" paint-order="stroke" stroke-linejoin="round">
<g transform="translate(12,669.6) scale(0.845)"><path d="M14 22H7V11H0V4h14v18z" stroke-width="5.5"/><path d="M28 22h-8l7.5-18h8L28 22z" stroke-width="5.5"/><circle cx="20" cy="8" r="4" stroke-width="5.5"/></g>
<text x="49" y="688" font-size="22.6" font-weight="bold" font-family="'Liberation Sans', 'Noto Sans CJK SC', sans-serif" textLength="120.8" lengthAdjust="spacingAndGlyphs">TradingView</text>
</g>
<text x="51.1" y="720" font-size="12.4" fill="#161618" font-weight="normal" text-anchor="middle" font-family="'Liberation Sans', 'Noto Sans CJK SC', sans-serif">26</text>
<text x="108.7" y="720" font-size="12.4" fill="#161618" font-weight="normal" text-anchor="middle" font-family="'Liberation Sans', 'Noto Sans CJK SC', sans-serif">28</text>
<text x="166.3" y="720" font-size="12.4" fill="#161618" font-weight="normal" text-anchor="middle" font-family="'Liberation Sans', 'Noto Sans CJK SC', sans-serif">30</text>
<text x="223.9" y="720" font-size="12.4" fill="#161618" font-weight="bold" text-anchor="middle" font-family="'Liberation Sans', 'Noto Sans CJK SC', sans-serif">2月</text>
<text x="281.5" y="720" font-size="12.4" fill="#161618" font-weight="normal" text-anchor="middle" font-family="'Liberation Sans', 'Noto Sans CJK SC', sans-serif">3</text>
<text x="339.1" y="720" font-size="12.4" fill="#161618" font-weight="normal" text-anchor="middle" font-family="'Liberation Sans', 'Noto Sans CJK SC', sans-serif">5</text>
<text x="396.7" y="720" font-size="12.4" fill="#161618" font-weight="normal" text-anchor="middle" font-family="'Liberation Sans', 'Noto Sans CJK SC', sans-serif">7</text>
<text x="454.3" y="720" font-size="12.4" fill="#161618" font-weight="normal" text-anchor="middle" font-family="'Liberation Sans', 'Noto Sans CJK SC', sans-serif">9</text>
<text x="511.9" y="720" font-size="12.4" fill="#161618" font-weight="normal" text-anchor="middle" font-family="'Liberation Sans', 'Noto Sans CJK SC', sans-serif">11</text>
<text x="569.5" y="720" font-size="12.4" fill="#161618" font-weight="normal" text-anchor="middle" font-family="'Liberation Sans', 'Noto Sans CJK SC', sans-serif">13</text>
<text x="627.1" y="720" font-size="12.4" fill="#161618" font-weight="normal" text-anchor="middle" font-family="'Liberation Sans', 'Noto Sans CJK SC', sans-serif">15</text>
<text x="684.7" y="720" font-size="12.4" fill="#161618" font-weight="normal" text-anchor="middle" font-family="'Liberation Sans', 'Noto Sans CJK SC', sans-serif">17</text>
<text x="742.3" y="720" font-size="12.4" fill="#161618" font-weight="normal" text-anchor="middle" font-family="'Liberation Sans', 'Noto Sans CJK SC', sans-serif">19</text>
<text x="799.9" y="720" font-size="12.4" fill="#161618" font-weight="normal" text-anchor="middle" font-family="'Liberation Sans', 'Noto Sans CJK SC', sans-serif">21</text>
<text x="857.5" y="720" font-size="12.4" fill="#161618" font-weight="normal" text-anchor="middle" font-family="'Liberation Sans', 'Noto Sans CJK SC', sans-serif">23</text>
<text x="915.1" y="720" font-size="12.4" fill="#161618" font-weight="normal" text-anchor="middle" font-family="'Liberation Sans', 'Noto Sans CJK SC', sans-serif">25</text>
<text x="972.7" y="720" font-size="12.4" fill="#161618" font-weight="normal" text-anchor="middle" font-family="'Liberation Sans', 'Noto Sans CJK SC', sans-serif">27</text>
<text x="1030.3" y="720" font-size="12.4" fill="#161618" font-weight="bold" text-anchor="middle" font-family="'Liberation Sans', 'Noto Sans CJK SC', sans-serif">3月</text>
<text x="1087.9" y="720" font-size="12.4" fill="#161618" font-weight="normal" text-anchor="middle" font-family="'Liberation Sans', 'Noto Sans CJK SC', sans-serif">3</text>
<text x="1145.5" y="720" font-size="12.4" fill="#161618" font-weight="normal" text-anchor="middle" font-family="'Liberation Sans', 'Noto Sans CJK SC', sans-serif">5</text>
</g>
</svg>
</body></html>
